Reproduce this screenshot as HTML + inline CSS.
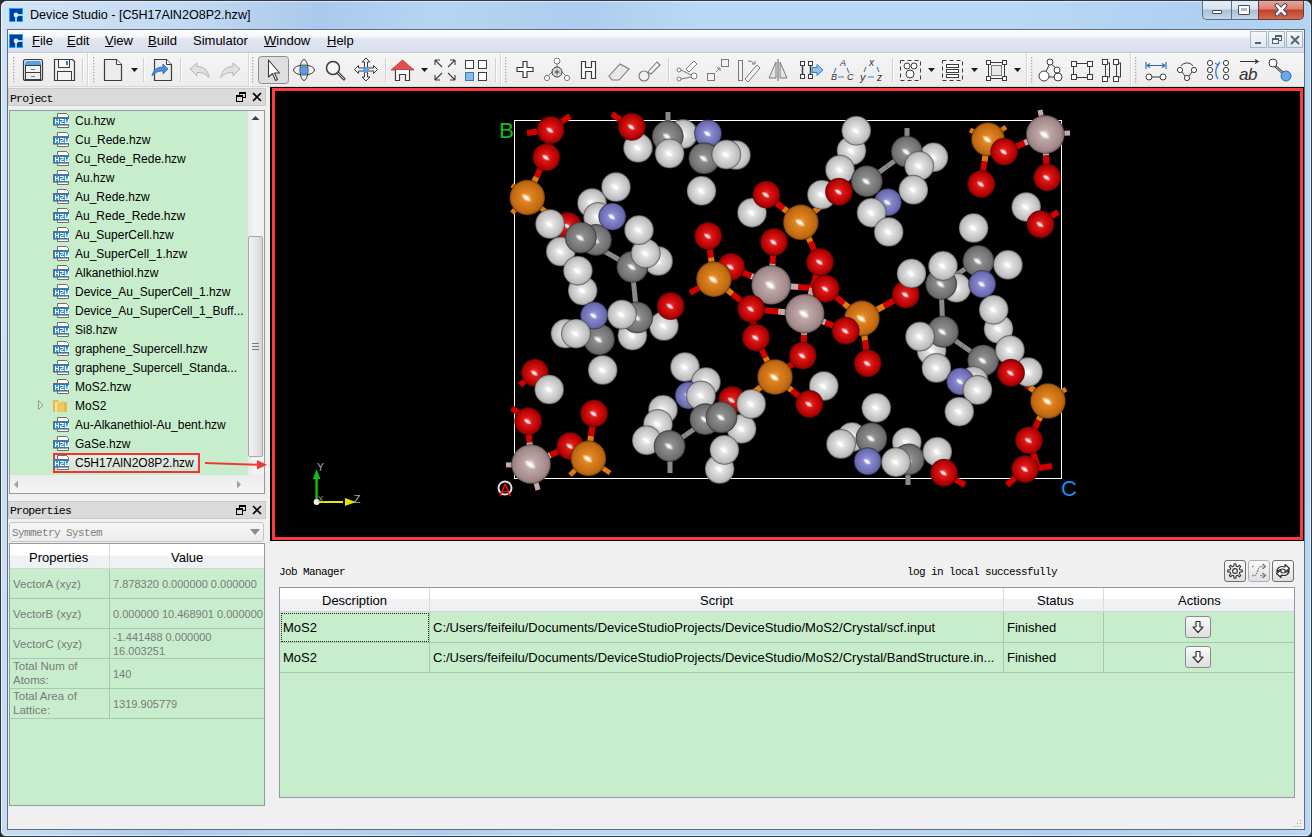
<!DOCTYPE html>
<html><head><meta charset="utf-8"><style>
html,body{margin:0;padding:0;width:1312px;height:837px;overflow:hidden;background:#2a2a2a;}
body{position:relative;font-family:'Liberation Sans', sans-serif;}
div{position:absolute;}
.t{white-space:nowrap;line-height:16px;}
u{text-decoration:underline;text-underline-offset:1px;}
</style></head><body>
<div style="left:0px;top:0px;width:1312px;height:837px;background:linear-gradient(100deg,#d2e3f6 0%,#c4dbf3 12%,#abc9ec 22%,#b6d4f3 30%,#aecdee 40%,#b9d8f7 48%,#b9d8f7 70%,#afd0f1 82%,#b9d8f6 100%);border:1px solid #303840;border-radius:7px 7px 6px 6px;box-sizing:border-box;"></div><div style="left:1px;top:1px;width:1310px;height:835px;border:1px solid rgba(255,255,255,0.55);border-radius:6px 6px 5px 5px;box-sizing:border-box;"></div><svg style="position:absolute;left:9px;top:8px" width="14" height="14" viewBox="0 0 14 14"><rect x="0" y="0" width="14" height="14" fill="#18a4ff"/><rect x="1" y="1" width="12" height="12" fill="#003c9c"/><rect x="7" y="6" width="7" height="2" fill="#90d4ff"/><rect x="6" y="7" width="2" height="7" fill="#90d4ff"/><circle cx="7" cy="7" r="2.4" fill="#d8ecff"/></svg><div class="t" style="left:30px;top:7px;font-size:12.6px;color:#000;">Device Studio - [C5H17AlN2O8P2.hzw]</div><div style="left:1202px;top:1px;width:29px;height:19px;background:linear-gradient(#e3eefa 0%,#d6e3f1 45%,#aabfd6 50%,#c5d6ea 100%);border:1px solid #5b6e86;border-top:none;border-right:none;border-radius:0 0 0 5px;box-sizing:border-box;"></div><div style="left:1231px;top:1px;width:27px;height:19px;background:linear-gradient(#e3eefa 0%,#d6e3f1 45%,#aabfd6 50%,#c5d6ea 100%);border:1px solid #5b6e86;border-top:none;border-right:none;box-sizing:border-box;"></div><div style="left:1258px;top:1px;width:46px;height:19px;background:linear-gradient(#eaa59a 0%,#d88070 45%,#c0402a 50%,#d76a50 100%);border:1px solid #6b3a32;border-top:none;border-radius:0 0 5px 0;box-sizing:border-box;"></div><div style="left:1212px;top:10px;width:10px;height:4px;background:#fff;border:1px solid #434a54;border-radius:1px;box-sizing:border-box;"></div><div style="left:1238px;top:5px;width:12px;height:10px;background:#fff;border:1px solid #434a54;border-radius:1px;box-sizing:border-box;"></div><div style="left:1241px;top:8px;width:6px;height:3px;background:#aabdd4;"></div><svg style="position:absolute;left:1273px;top:3px" width="16" height="14" viewBox="0 0 16 14"><path d="M4 2.5 L12 11 M12 2.5 L4 11" stroke="#3c4450" stroke-width="4.6" stroke-linecap="round"/><path d="M4 2.5 L12 11 M12 2.5 L4 11" stroke="#fff" stroke-width="2.6" stroke-linecap="round"/></svg><div style="left:7px;top:29px;width:1298px;height:801px;background:#f0f0f0;border:1px solid #5f6d7d;box-sizing:border-box;"></div><div style="left:8px;top:30px;width:1296px;height:22px;background:linear-gradient(#fdfdfe 0%,#f4f6fb 30%,#e4e8f3 38%,#dfe3f0 60%,#d9deed 100%);"></div><div style="left:8px;top:52px;width:1296px;height:1px;background:#c3cad8;"></div><svg style="position:absolute;left:9px;top:34px" width="14" height="14" viewBox="0 0 14 14"><rect x="0" y="0" width="14" height="14" fill="#18a4ff"/><rect x="1" y="1" width="12" height="12" fill="#003c9c"/><rect x="7" y="6" width="7" height="2" fill="#90d4ff"/><rect x="6" y="7" width="2" height="7" fill="#90d4ff"/><circle cx="7" cy="7" r="2.4" fill="#d8ecff"/></svg><div class="t" style="left:32px;top:33px;font-size:13px;color:#000;"><u>F</u>ile</div><div class="t" style="left:67px;top:33px;font-size:13px;color:#000;"><u>E</u>dit</div><div class="t" style="left:105px;top:33px;font-size:13px;color:#000;"><u>V</u>iew</div><div class="t" style="left:148px;top:33px;font-size:13px;color:#000;"><u>B</u>uild</div><div class="t" style="left:193px;top:33px;font-size:13px;color:#000;">Simulator</div><div class="t" style="left:264px;top:33px;font-size:13px;color:#000;"><u>W</u>indow</div><div class="t" style="left:327px;top:33px;font-size:13px;color:#000;"><u>H</u>elp</div><div style="left:1250px;top:31px;width:17px;height:17px;background:linear-gradient(#f4f8fc,#dde6f0);border:1px solid #a9b8c8;box-sizing:border-box;"></div><div style="left:1268px;top:31px;width:17px;height:17px;background:linear-gradient(#f4f8fc,#dde6f0);border:1px solid #a9b8c8;box-sizing:border-box;"></div><div style="left:1286px;top:31px;width:17px;height:17px;background:linear-gradient(#f4f8fc,#dde6f0);border:1px solid #a9b8c8;box-sizing:border-box;"></div><div style="left:1255px;top:42px;width:6px;height:2px;background:#55606c;"></div><svg style="position:absolute;left:1272px;top:35px" width="10" height="10" viewBox="0 0 10 10"><rect x="3.5" y="0.5" width="6" height="5" fill="none" stroke="#55606c"/><rect x="3.5" y="0.5" width="6" height="1.5" fill="#55606c"/><rect x="0.5" y="3.5" width="6" height="5" fill="#f0f4f8" stroke="#55606c"/><rect x="0.5" y="3.5" width="6" height="1.5" fill="#55606c"/></svg><svg style="position:absolute;left:1290px;top:35px" width="10" height="10" viewBox="0 0 10 10"><path d="M1 1 L9 9 M9 1 L1 9" stroke="#55606c" stroke-width="1.8"/></svg><div style="left:8px;top:53px;width:1296px;height:33px;background:linear-gradient(#f5f5f5,#ececec);"></div><div style="left:8px;top:86px;width:1296px;height:1px;background:#d8d8d8;"></div><svg style="position:absolute;left:0;top:0" width="1312" height="90" viewBox="0 0 1312 90"><rect x="87" y="53" width="1" height="33" fill="#d8d8d8"/><rect x="88" y="53" width="1" height="33" fill="#ffffff"/><rect x="248" y="53" width="1" height="33" fill="#d8d8d8"/><rect x="249" y="53" width="1" height="33" fill="#ffffff"/><rect x="500" y="53" width="1" height="33" fill="#d8d8d8"/><rect x="501" y="53" width="1" height="33" fill="#ffffff"/><rect x="1026" y="53" width="1" height="33" fill="#d8d8d8"/><rect x="1027" y="53" width="1" height="33" fill="#ffffff"/><rect x="1130" y="53" width="1" height="33" fill="#d8d8d8"/><rect x="1131" y="53" width="1" height="33" fill="#ffffff"/><rect x="13" y="57" width="1.3" height="1.3" fill="#a8a8a8"/><rect x="13" y="60" width="1.3" height="1.3" fill="#a8a8a8"/><rect x="13" y="63" width="1.3" height="1.3" fill="#a8a8a8"/><rect x="13" y="66" width="1.3" height="1.3" fill="#a8a8a8"/><rect x="13" y="69" width="1.3" height="1.3" fill="#a8a8a8"/><rect x="13" y="72" width="1.3" height="1.3" fill="#a8a8a8"/><rect x="13" y="75" width="1.3" height="1.3" fill="#a8a8a8"/><rect x="13" y="78" width="1.3" height="1.3" fill="#a8a8a8"/><rect x="13" y="81" width="1.3" height="1.3" fill="#a8a8a8"/><rect x="93" y="57" width="1.3" height="1.3" fill="#a8a8a8"/><rect x="93" y="60" width="1.3" height="1.3" fill="#a8a8a8"/><rect x="93" y="63" width="1.3" height="1.3" fill="#a8a8a8"/><rect x="93" y="66" width="1.3" height="1.3" fill="#a8a8a8"/><rect x="93" y="69" width="1.3" height="1.3" fill="#a8a8a8"/><rect x="93" y="72" width="1.3" height="1.3" fill="#a8a8a8"/><rect x="93" y="75" width="1.3" height="1.3" fill="#a8a8a8"/><rect x="93" y="78" width="1.3" height="1.3" fill="#a8a8a8"/><rect x="93" y="81" width="1.3" height="1.3" fill="#a8a8a8"/><rect x="252" y="57" width="1.3" height="1.3" fill="#a8a8a8"/><rect x="252" y="60" width="1.3" height="1.3" fill="#a8a8a8"/><rect x="252" y="63" width="1.3" height="1.3" fill="#a8a8a8"/><rect x="252" y="66" width="1.3" height="1.3" fill="#a8a8a8"/><rect x="252" y="69" width="1.3" height="1.3" fill="#a8a8a8"/><rect x="252" y="72" width="1.3" height="1.3" fill="#a8a8a8"/><rect x="252" y="75" width="1.3" height="1.3" fill="#a8a8a8"/><rect x="252" y="78" width="1.3" height="1.3" fill="#a8a8a8"/><rect x="252" y="81" width="1.3" height="1.3" fill="#a8a8a8"/><rect x="505" y="57" width="1.3" height="1.3" fill="#a8a8a8"/><rect x="505" y="60" width="1.3" height="1.3" fill="#a8a8a8"/><rect x="505" y="63" width="1.3" height="1.3" fill="#a8a8a8"/><rect x="505" y="66" width="1.3" height="1.3" fill="#a8a8a8"/><rect x="505" y="69" width="1.3" height="1.3" fill="#a8a8a8"/><rect x="505" y="72" width="1.3" height="1.3" fill="#a8a8a8"/><rect x="505" y="75" width="1.3" height="1.3" fill="#a8a8a8"/><rect x="505" y="78" width="1.3" height="1.3" fill="#a8a8a8"/><rect x="505" y="81" width="1.3" height="1.3" fill="#a8a8a8"/><rect x="1031" y="57" width="1.3" height="1.3" fill="#a8a8a8"/><rect x="1031" y="60" width="1.3" height="1.3" fill="#a8a8a8"/><rect x="1031" y="63" width="1.3" height="1.3" fill="#a8a8a8"/><rect x="1031" y="66" width="1.3" height="1.3" fill="#a8a8a8"/><rect x="1031" y="69" width="1.3" height="1.3" fill="#a8a8a8"/><rect x="1031" y="72" width="1.3" height="1.3" fill="#a8a8a8"/><rect x="1031" y="75" width="1.3" height="1.3" fill="#a8a8a8"/><rect x="1031" y="78" width="1.3" height="1.3" fill="#a8a8a8"/><rect x="1031" y="81" width="1.3" height="1.3" fill="#a8a8a8"/><rect x="1135" y="57" width="1.3" height="1.3" fill="#a8a8a8"/><rect x="1135" y="60" width="1.3" height="1.3" fill="#a8a8a8"/><rect x="1135" y="63" width="1.3" height="1.3" fill="#a8a8a8"/><rect x="1135" y="66" width="1.3" height="1.3" fill="#a8a8a8"/><rect x="1135" y="69" width="1.3" height="1.3" fill="#a8a8a8"/><rect x="1135" y="72" width="1.3" height="1.3" fill="#a8a8a8"/><rect x="1135" y="75" width="1.3" height="1.3" fill="#a8a8a8"/><rect x="1135" y="78" width="1.3" height="1.3" fill="#a8a8a8"/><rect x="1135" y="81" width="1.3" height="1.3" fill="#a8a8a8"/><rect x="23.5" y="59.5" width="19" height="21" rx="2" fill="#e6e6e6" stroke="#3c3c3c" stroke-width="1.2"/><path d="M26 61 h14 l1.5 4 h-17 z" fill="#5aa0e8"/><rect x="25.5" y="65.5" width="15" height="7" fill="#f4f4f4" stroke="#3c3c3c"/><rect x="25.5" y="72.5" width="15" height="7" fill="#ececec" stroke="#3c3c3c"/><rect x="31" y="69" width="4" height="1" fill="#7a7a7a"/><rect x="31" y="76" width="4" height="1" fill="#7a7a7a"/><path d="M54.5 59.5 h18 l2 2 v19 h-20 z" fill="#f0f0f0" stroke="#3c3c3c" stroke-width="1.2"/><rect x="58.5" y="59.5" width="11" height="8" fill="#fafafa" stroke="#3c3c3c"/><rect x="66" y="61" width="2" height="4" fill="#2a7ad0"/><rect x="57.5" y="71.5" width="14" height="9" fill="#f4f4f4" stroke="#3c3c3c"/><rect x="82" y="58" width="1" height="24" fill="#d2d2d2"/><rect x="83" y="58" width="1" height="24" fill="#fafafa"/><path d="M104.5 59.5 h12 l5 5 v16 h-17 z" fill="#ececec" stroke="#3c3c3c" stroke-width="1.2"/><path d="M116.5 59.5 v5 h5" fill="#fff" stroke="#3c3c3c"/><path d="M131 68 h7 l-3.5 4 z" fill="#1a1a1a"/><rect x="143" y="58" width="1" height="24" fill="#d2d2d2"/><rect x="144" y="58" width="1" height="24" fill="#fafafa"/><path d="M154.5 59.5 h12 l5 5 v16 h-17 z" fill="#ececec" stroke="#3c3c3c" stroke-width="1.2"/><path d="M166.5 59.5 v5 h5" fill="#fff" stroke="#3c3c3c"/><path d="M152 76 C153 70 157 67 163 67 v-3 l5 5 l-5 5 v-3 C159 71 155 72 152 76 z" fill="#4a8ed6" stroke="#2a68b0" stroke-width="0.8"/><rect x="180" y="58" width="1" height="24" fill="#d2d2d2"/><rect x="181" y="58" width="1" height="24" fill="#fafafa"/><path d="M190 69 l7 -6 v3.5 c6 0 11 3 12 11 c-3 -4 -7 -5 -12 -5 v3.5 z" fill="#e0e0e0" stroke="#b4b4b4"/><path d="M240 69 l-7 -6 v3.5 c-6 0 -11 3 -12 11 c3 -4 7 -5 12 -5 v3.5 z" fill="#e0e0e0" stroke="#b4b4b4"/><rect x="258.5" y="56.5" width="30" height="27" rx="3" fill="#dedede" stroke="#8c8c8c"/><path d="M268.5 60 v17 l4 -3.5 l3 7 l2 -1 l-3 -6.5 h5 z" fill="#fff" stroke="#3c3c3c" stroke-width="1.1" stroke-linejoin="round"/><ellipse cx="304" cy="70" rx="10.5" ry="5" fill="none" stroke="#3c3c3c" stroke-width="1"/><ellipse cx="304" cy="70" rx="4" ry="10.5" fill="none" stroke="#3c3c3c" stroke-width="1"/><circle cx="304" cy="70" r="4" fill="#5a9ee6" stroke="#2a68b0" stroke-width="0.6"/><circle cx="333" cy="68" r="6.5" fill="#f6f6f6" stroke="#3c3c3c" stroke-width="1.5"/><path d="M338 73 l6 6" stroke="#3c3c3c" stroke-width="3" stroke-linecap="round"/><path d="M338 73 l6 6" stroke="#e0e0e0" stroke-width="1" stroke-linecap="round"/><path d="M366 58 l4 4 h-2.5 v6 h6 v-2.5 l4 4 l-4 4 v-2.5 h-6 v6 h2.5 l-4 4 l-4 -4 h2.5 v-6 h-6 v2.5 l-4 -4 l4 -4 v2.5 h6 v-6 h-2.5 z" fill="#f4f4f4" stroke="#3c3c3c" stroke-width="1"/><circle cx="366" cy="70" r="3" fill="#5a9ee6"/><rect x="385" y="58" width="1" height="24" fill="#d2d2d2"/><rect x="386" y="58" width="1" height="24" fill="#fafafa"/><path d="M391 70 l11.5 -10 l11.5 10 z" fill="#e05050" stroke="#c03030" stroke-width="0.8"/><path d="M395.5 70 v10.5 h4 v-6 h6 v6 h4 v-10.5" fill="#fff" stroke="#3c3c3c" stroke-width="1.2"/><path d="M421 68 h7 l-3.5 4 z" fill="#1a1a1a"/><path d="M435 60 h5 M435 60 v5 M435 60 l7 7" stroke="#3c3c3c" stroke-width="1.1" fill="none"/><path d="M455 60 h-5 M455 60 v5 M455 60 l-7 7" stroke="#3c3c3c" stroke-width="1.1" fill="none"/><path d="M435 80 h5 M435 80 v-5 M435 80 l7 -7" stroke="#3c3c3c" stroke-width="1.1" fill="none"/><path d="M455 80 h-5 M455 80 v-5 M455 80 l-7 -7" stroke="#3c3c3c" stroke-width="1.1" fill="none"/><rect x="465.5" y="60.5" width="8" height="8" fill="#fff" stroke="#3c3c3c"/><rect x="478.5" y="60.5" width="8" height="8" fill="#fff" stroke="#3c3c3c"/><rect x="465.5" y="72.5" width="8" height="8" fill="#8ab8e8" stroke="#3a78c0"/><rect x="478.5" y="72.5" width="8" height="8" fill="#fff" stroke="#3c3c3c"/><rect x="495" y="58" width="1" height="24" fill="#d2d2d2"/><rect x="496" y="58" width="1" height="24" fill="#fafafa"/><path d="M523 61.5 h4 v6 h6 v4 h-6 v6 h-4 v-6 h-6 v-4 h6 z" fill="#fff" stroke="#3c3c3c" stroke-width="1.2"/><path d="M557 64 v4 M552 72 l-5 5 M562 72 l5 5" stroke="#7a7a7a" stroke-width="1"/><circle cx="557" cy="61" r="3" fill="#fff" stroke="#7a7a7a"/><circle cx="557" cy="72" r="5" fill="#d8d8d8" stroke="#3c3c3c"/><path d="M554.5 72 h5 M557 69.5 v5" stroke="#3c3c3c" stroke-width="1"/><circle cx="547" cy="78" r="2.6" fill="#fff" stroke="#7a7a7a"/><circle cx="567" cy="78" r="2.6" fill="#fff" stroke="#7a7a7a"/><path d="M581.5 61.5 h4 v6 h6 v-6 h4 v17 h-4 v-7 h-6 v7 h-4 z" fill="#fff" stroke="#3c3c3c" stroke-width="1.2"/><path d="M609 76 l11 -12 l9 5 l-10 11 h-7 z" fill="#e8e8e8" stroke="#7a7a7a" stroke-width="1.1"/><circle cx="644" cy="76" r="5" fill="#f2f2f2" stroke="#7a7a7a" stroke-width="1.2"/><path d="M648 72 l9 -10 l3 3 l-9 9 z" fill="#fff" stroke="#7a7a7a" stroke-width="1.1"/><rect x="668" y="58" width="1" height="24" fill="#d2d2d2"/><rect x="669" y="58" width="1" height="24" fill="#fafafa"/><circle cx="679" cy="70" r="2" fill="#fff" stroke="#7a7a7a"/><circle cx="679" cy="79" r="2" fill="#fff" stroke="#7a7a7a"/><circle cx="694" cy="76" r="3" fill="#fff" stroke="#7a7a7a"/><path d="M681 70 l10 5 M681 79 l10 -2" stroke="#7a7a7a"/><path d="M686 69 l8 -8 l3 3 l-8 8 z" fill="#fff" stroke="#7a7a7a"/><rect x="707.5" y="73.5" width="7" height="7" fill="#f2f2f2" stroke="#7a7a7a"/><rect x="721.5" y="59.5" width="7" height="7" fill="#f2f2f2" stroke="#7a7a7a"/><path d="M716 72 l4 -4 M717 68 h3 v3" stroke="#7a7a7a" fill="none"/><rect x="738.5" y="60.5" width="4" height="20" fill="#f2f2f2" stroke="#7a7a7a"/><path d="M745 79 l12 -14 l3 3 l-12 14 z" fill="#f2f2f2" stroke="#7a7a7a"/><path d="M748 61 c3 0 5 1 6 3 M752 64 h3 v-3" stroke="#7a7a7a" fill="none"/><path d="M778 59 v22" stroke="#7a7a7a" stroke-width="1.2"/><path d="M776 62 l-7 16 h7 z" fill="#e4e4e4" stroke="#7a7a7a"/><path d="M780 62 l7 16 h-7 z" fill="#e4e4e4" stroke="#7a7a7a"/><rect x="800.5" y="61.5" width="4" height="4" fill="#fff" stroke="#3c3c3c"/><rect x="808.5" y="61.5" width="4" height="4" fill="#fff" stroke="#3c3c3c"/><rect x="800.5" y="74.5" width="4" height="4" fill="#fff" stroke="#3c3c3c"/><rect x="808.5" y="74.5" width="4" height="4" fill="#fff" stroke="#3c3c3c"/><path d="M802.5 66 v8 M810.5 66 v8" stroke="#3c3c3c" stroke-width="1.5"/><path d="M812 67.5 h5 v-3 l6 5.5 l-6 5.5 v-3 h-5 z" fill="#8ec0f0" stroke="#3a78c0"/><text x="840" y="66" font-family="Liberation Sans" font-style="italic" font-size="9" fill="#333">A</text><text x="831" y="80" font-family="Liberation Sans" font-style="italic" font-size="9" fill="#333">B</text><text x="847" y="80" font-family="Liberation Sans" font-style="italic" font-size="9" fill="#333">C</text><path d="M836 68 l-2 5 M847 68 l2 5 M838 77 h6" stroke="#3a80d0" stroke-width="1.1" fill="none"/><text x="869" y="66" font-family="Liberation Sans" font-style="italic" font-size="10" fill="#333">x</text><text x="860" y="81" font-family="Liberation Sans" font-style="italic" font-size="11" fill="#333">y</text><text x="877" y="81" font-family="Liberation Sans" font-style="italic" font-size="10" fill="#333">z</text><path d="M866 67 l-2 5 M877 67 l2 5 M868 77 h6" stroke="#3a80d0" stroke-width="1.1" fill="none"/><rect x="892" y="58" width="1" height="24" fill="#d2d2d2"/><rect x="893" y="58" width="1" height="24" fill="#fafafa"/><rect x="900.5" y="60.5" width="20" height="20" fill="none" stroke="#3c3c3c" stroke-dasharray="4 3"/><circle cx="907" cy="66" r="3" fill="#fff" stroke="#3c3c3c"/><circle cx="914" cy="66" r="3" fill="#fff" stroke="#3c3c3c"/><circle cx="910" cy="74" r="4" fill="#fff" stroke="#3c3c3c"/><path d="M928 68 h7 l-3.5 4 z" fill="#1a1a1a"/><rect x="942.5" y="60.5" width="20" height="20" fill="none" stroke="#3c3c3c" stroke-dasharray="4 3"/><rect x="946.5" y="64.5" width="12" height="3" fill="#fff" stroke="#3c3c3c"/><rect x="946.5" y="69.5" width="12" height="3" fill="#fff" stroke="#3c3c3c"/><rect x="946.5" y="74.5" width="12" height="3" fill="#fff" stroke="#3c3c3c"/><path d="M971 68 h7 l-3.5 4 z" fill="#1a1a1a"/><rect x="988.5" y="62.5" width="16" height="16" fill="#f4f4f4" stroke="#3c3c3c"/><rect x="991.5" y="65.5" width="10" height="10" fill="#e8e8e8" stroke="#7a7a7a"/><rect x="986.5" y="60.5" width="4" height="4" fill="#fff" stroke="#3c3c3c"/><rect x="1002.5" y="60.5" width="4" height="4" fill="#fff" stroke="#3c3c3c"/><rect x="986.5" y="76.5" width="4" height="4" fill="#fff" stroke="#3c3c3c"/><rect x="1002.5" y="76.5" width="4" height="4" fill="#fff" stroke="#3c3c3c"/><path d="M1014 68 h7 l-3.5 4 z" fill="#1a1a1a"/><path d="M1050 63 l-6 13 M1050 63 l7 6 M1057 69 l0 8 M1044 77 h13" stroke="#3c3c3c" fill="none"/><circle cx="1050" cy="62" r="3" fill="#fff" stroke="#3c3c3c"/><circle cx="1057" cy="70" r="3" fill="#fff" stroke="#3c3c3c"/><circle cx="1044" cy="76" r="5" fill="#fff" stroke="#3c3c3c"/><circle cx="1058" cy="77" r="4" fill="#fff" stroke="#3c3c3c"/><rect x="1073.5" y="63.5" width="16" height="14" fill="none" stroke="#3c3c3c"/><rect x="1071.5" y="61.5" width="5" height="5" fill="#fff" stroke="#3c3c3c"/><rect x="1087.5" y="61.5" width="5" height="5" fill="#fff" stroke="#3c3c3c"/><rect x="1071.5" y="74.5" width="5" height="5" fill="#fff" stroke="#3c3c3c"/><rect x="1087.5" y="74.5" width="5" height="5" fill="#fff" stroke="#3c3c3c"/><rect x="1105.5" y="63" width="4" height="14" fill="none" stroke="#3c3c3c"/><rect x="1116.5" y="63" width="4" height="14" fill="none" stroke="#3c3c3c"/><rect x="1102.5" y="59.5" width="5" height="5" fill="#fff" stroke="#3c3c3c"/><rect x="1113.5" y="59.5" width="5" height="5" fill="#fff" stroke="#3c3c3c"/><rect x="1102.5" y="76.5" width="5" height="5" fill="#fff" stroke="#3c3c3c"/><rect x="1113.5" y="76.5" width="5" height="5" fill="#fff" stroke="#3c3c3c"/><path d="M1146 62 v7 M1166 62 v7 M1147 65.5 h18 M1147 65.5 l3 -2 M1147 65.5 l3 2 M1165 65.5 l-3 -2 M1165 65.5 l-3 2" stroke="#2a6ab0" stroke-width="1.1" fill="none"/><circle cx="1149" cy="77" r="3" fill="#fff" stroke="#3c3c3c"/><circle cx="1163" cy="77" r="3" fill="#fff" stroke="#3c3c3c"/><path d="M1152 77 h8" stroke="#3c3c3c"/><circle cx="1180" cy="70" r="2.6" fill="#fff" stroke="#3c3c3c"/><circle cx="1194" cy="70" r="2.6" fill="#fff" stroke="#3c3c3c"/><circle cx="1187" cy="78" r="2.6" fill="#fff" stroke="#3c3c3c"/><path d="M1182 72 l3 4 M1192 72 l-3 4" stroke="#3c3c3c"/><path d="M1181 66 c2 -4 10 -4 12 0" stroke="#3c3c3c" fill="none"/><circle cx="1210" cy="63" r="2.6" fill="#fff" stroke="#3c3c3c"/><circle cx="1210" cy="70" r="2.6" fill="#fff" stroke="#3c3c3c"/><circle cx="1210" cy="77" r="2.6" fill="#fff" stroke="#3c3c3c"/><circle cx="1226" cy="63" r="2.6" fill="#fff" stroke="#3c3c3c"/><circle cx="1226" cy="70" r="2.6" fill="#fff" stroke="#3c3c3c"/><circle cx="1226" cy="77" r="2.6" fill="#fff" stroke="#3c3c3c"/><path d="M1218 79 c-3 -4 -3 -10 0 -14 M1215 63 l3 2 l2 -3" stroke="#3a80d0" stroke-width="1.4" fill="none"/><text x="1239" y="80" font-family="Liberation Sans" font-style="italic" font-size="17" fill="#333" letter-spacing="-0.5">ab</text><path d="M1240 61.5 h18 l-3 -2 M1258 61.5 l-3 2" stroke="#333" stroke-width="1.1" fill="none"/><path d="M1274 65 l10 9" stroke="#3c3c3c" stroke-width="2.4"/><path d="M1274 65 l10 9" stroke="#fff" stroke-width="0.8"/><circle cx="1273" cy="63" r="4" fill="#fff" stroke="#3c3c3c"/><circle cx="1286" cy="76" r="5" fill="#6aa8e8" stroke="#2a68b0"/></svg><div style="left:8px;top:88px;width:258px;height:18px;background:#dadada;border:1px solid #cacaca;box-sizing:border-box;"></div><div class="t" style="left:10px;top:91px;font-family:'Liberation Mono', monospace;font-size:11.5px;letter-spacing:-0.8px;color:#000;">Project</div><svg style="position:absolute;left:236px;top:92px" width="10" height="10" viewBox="0 0 10 10"><rect x="3.5" y="0.5" width="6" height="5" fill="none" stroke="#000"/><rect x="3.5" y="0.5" width="6" height="1.5" fill="#000"/><rect x="0.5" y="3.5" width="6" height="6" fill="#dadada" stroke="#000"/><rect x="0.5" y="3.5" width="6" height="1.5" fill="#000"/></svg><svg style="position:absolute;left:252px;top:92px" width="10" height="10" viewBox="0 0 10 10"><path d="M1 1 L9 9 M9 1 L1 9" stroke="#000" stroke-width="1.6"/></svg><div style="left:9px;top:110px;width:256px;height:384px;background:#c7edcc;border:1px solid #8e9aa8;box-sizing:border-box;"></div><div style="left:53px;top:453px;width:147px;height:20px;border:2.5px solid #f03434;box-sizing:border-box;background:linear-gradient(#e6eee6,#d6e2d6);"></div><svg style="position:absolute;left:52px;top:112px" width="18" height="17" viewBox="0 0 18 17"><path d="M5.5 1.5 H14.5 L16.5 3.5 V15.5 H5.5 Z" fill="#fff" stroke="#6e6e6e"/><rect x="1" y="5" width="16" height="8.6" fill="#6e6e6e"/><rect x="2" y="6" width="15" height="6.6" fill="#1a7fd4"/><g fill="#fff"><rect x="3" y="7" width="1.2" height="5"/><rect x="5.8" y="7" width="1.2" height="5"/><rect x="3" y="9" width="4" height="1"/><rect x="8" y="7" width="3.5" height="1"/><rect x="10.6" y="7" width="1" height="2.6"/><rect x="8.6" y="9.2" width="2.8" height="1"/><rect x="8" y="9.8" width="1" height="2.2"/><rect x="8" y="11" width="4" height="1"/><rect x="12.8" y="7" width="1.1" height="5"/><rect x="14.6" y="8.6" width="1" height="3.4"/><rect x="16" y="7" width="1" height="5"/><rect x="12.8" y="11" width="4.2" height="1"/></g></svg><div class="t" style="left:75px;top:113px;font-size:12px;color:#000;white-space:nowrap;">Cu.hzw</div><svg style="position:absolute;left:52px;top:131px" width="18" height="17" viewBox="0 0 18 17"><path d="M5.5 1.5 H14.5 L16.5 3.5 V15.5 H5.5 Z" fill="#fff" stroke="#6e6e6e"/><rect x="1" y="5" width="16" height="8.6" fill="#6e6e6e"/><rect x="2" y="6" width="15" height="6.6" fill="#1a7fd4"/><g fill="#fff"><rect x="3" y="7" width="1.2" height="5"/><rect x="5.8" y="7" width="1.2" height="5"/><rect x="3" y="9" width="4" height="1"/><rect x="8" y="7" width="3.5" height="1"/><rect x="10.6" y="7" width="1" height="2.6"/><rect x="8.6" y="9.2" width="2.8" height="1"/><rect x="8" y="9.8" width="1" height="2.2"/><rect x="8" y="11" width="4" height="1"/><rect x="12.8" y="7" width="1.1" height="5"/><rect x="14.6" y="8.6" width="1" height="3.4"/><rect x="16" y="7" width="1" height="5"/><rect x="12.8" y="11" width="4.2" height="1"/></g></svg><div class="t" style="left:75px;top:132px;font-size:12px;color:#000;white-space:nowrap;">Cu_Rede.hzw</div><svg style="position:absolute;left:52px;top:150px" width="18" height="17" viewBox="0 0 18 17"><path d="M5.5 1.5 H14.5 L16.5 3.5 V15.5 H5.5 Z" fill="#fff" stroke="#6e6e6e"/><rect x="1" y="5" width="16" height="8.6" fill="#6e6e6e"/><rect x="2" y="6" width="15" height="6.6" fill="#1a7fd4"/><g fill="#fff"><rect x="3" y="7" width="1.2" height="5"/><rect x="5.8" y="7" width="1.2" height="5"/><rect x="3" y="9" width="4" height="1"/><rect x="8" y="7" width="3.5" height="1"/><rect x="10.6" y="7" width="1" height="2.6"/><rect x="8.6" y="9.2" width="2.8" height="1"/><rect x="8" y="9.8" width="1" height="2.2"/><rect x="8" y="11" width="4" height="1"/><rect x="12.8" y="7" width="1.1" height="5"/><rect x="14.6" y="8.6" width="1" height="3.4"/><rect x="16" y="7" width="1" height="5"/><rect x="12.8" y="11" width="4.2" height="1"/></g></svg><div class="t" style="left:75px;top:151px;font-size:12px;color:#000;white-space:nowrap;">Cu_Rede_Rede.hzw</div><svg style="position:absolute;left:52px;top:169px" width="18" height="17" viewBox="0 0 18 17"><path d="M5.5 1.5 H14.5 L16.5 3.5 V15.5 H5.5 Z" fill="#fff" stroke="#6e6e6e"/><rect x="1" y="5" width="16" height="8.6" fill="#6e6e6e"/><rect x="2" y="6" width="15" height="6.6" fill="#1a7fd4"/><g fill="#fff"><rect x="3" y="7" width="1.2" height="5"/><rect x="5.8" y="7" width="1.2" height="5"/><rect x="3" y="9" width="4" height="1"/><rect x="8" y="7" width="3.5" height="1"/><rect x="10.6" y="7" width="1" height="2.6"/><rect x="8.6" y="9.2" width="2.8" height="1"/><rect x="8" y="9.8" width="1" height="2.2"/><rect x="8" y="11" width="4" height="1"/><rect x="12.8" y="7" width="1.1" height="5"/><rect x="14.6" y="8.6" width="1" height="3.4"/><rect x="16" y="7" width="1" height="5"/><rect x="12.8" y="11" width="4.2" height="1"/></g></svg><div class="t" style="left:75px;top:170px;font-size:12px;color:#000;white-space:nowrap;">Au.hzw</div><svg style="position:absolute;left:52px;top:188px" width="18" height="17" viewBox="0 0 18 17"><path d="M5.5 1.5 H14.5 L16.5 3.5 V15.5 H5.5 Z" fill="#fff" stroke="#6e6e6e"/><rect x="1" y="5" width="16" height="8.6" fill="#6e6e6e"/><rect x="2" y="6" width="15" height="6.6" fill="#1a7fd4"/><g fill="#fff"><rect x="3" y="7" width="1.2" height="5"/><rect x="5.8" y="7" width="1.2" height="5"/><rect x="3" y="9" width="4" height="1"/><rect x="8" y="7" width="3.5" height="1"/><rect x="10.6" y="7" width="1" height="2.6"/><rect x="8.6" y="9.2" width="2.8" height="1"/><rect x="8" y="9.8" width="1" height="2.2"/><rect x="8" y="11" width="4" height="1"/><rect x="12.8" y="7" width="1.1" height="5"/><rect x="14.6" y="8.6" width="1" height="3.4"/><rect x="16" y="7" width="1" height="5"/><rect x="12.8" y="11" width="4.2" height="1"/></g></svg><div class="t" style="left:75px;top:189px;font-size:12px;color:#000;white-space:nowrap;">Au_Rede.hzw</div><svg style="position:absolute;left:52px;top:207px" width="18" height="17" viewBox="0 0 18 17"><path d="M5.5 1.5 H14.5 L16.5 3.5 V15.5 H5.5 Z" fill="#fff" stroke="#6e6e6e"/><rect x="1" y="5" width="16" height="8.6" fill="#6e6e6e"/><rect x="2" y="6" width="15" height="6.6" fill="#1a7fd4"/><g fill="#fff"><rect x="3" y="7" width="1.2" height="5"/><rect x="5.8" y="7" width="1.2" height="5"/><rect x="3" y="9" width="4" height="1"/><rect x="8" y="7" width="3.5" height="1"/><rect x="10.6" y="7" width="1" height="2.6"/><rect x="8.6" y="9.2" width="2.8" height="1"/><rect x="8" y="9.8" width="1" height="2.2"/><rect x="8" y="11" width="4" height="1"/><rect x="12.8" y="7" width="1.1" height="5"/><rect x="14.6" y="8.6" width="1" height="3.4"/><rect x="16" y="7" width="1" height="5"/><rect x="12.8" y="11" width="4.2" height="1"/></g></svg><div class="t" style="left:75px;top:208px;font-size:12px;color:#000;white-space:nowrap;">Au_Rede_Rede.hzw</div><svg style="position:absolute;left:52px;top:226px" width="18" height="17" viewBox="0 0 18 17"><path d="M5.5 1.5 H14.5 L16.5 3.5 V15.5 H5.5 Z" fill="#fff" stroke="#6e6e6e"/><rect x="1" y="5" width="16" height="8.6" fill="#6e6e6e"/><rect x="2" y="6" width="15" height="6.6" fill="#1a7fd4"/><g fill="#fff"><rect x="3" y="7" width="1.2" height="5"/><rect x="5.8" y="7" width="1.2" height="5"/><rect x="3" y="9" width="4" height="1"/><rect x="8" y="7" width="3.5" height="1"/><rect x="10.6" y="7" width="1" height="2.6"/><rect x="8.6" y="9.2" width="2.8" height="1"/><rect x="8" y="9.8" width="1" height="2.2"/><rect x="8" y="11" width="4" height="1"/><rect x="12.8" y="7" width="1.1" height="5"/><rect x="14.6" y="8.6" width="1" height="3.4"/><rect x="16" y="7" width="1" height="5"/><rect x="12.8" y="11" width="4.2" height="1"/></g></svg><div class="t" style="left:75px;top:227px;font-size:12px;color:#000;white-space:nowrap;">Au_SuperCell.hzw</div><svg style="position:absolute;left:52px;top:245px" width="18" height="17" viewBox="0 0 18 17"><path d="M5.5 1.5 H14.5 L16.5 3.5 V15.5 H5.5 Z" fill="#fff" stroke="#6e6e6e"/><rect x="1" y="5" width="16" height="8.6" fill="#6e6e6e"/><rect x="2" y="6" width="15" height="6.6" fill="#1a7fd4"/><g fill="#fff"><rect x="3" y="7" width="1.2" height="5"/><rect x="5.8" y="7" width="1.2" height="5"/><rect x="3" y="9" width="4" height="1"/><rect x="8" y="7" width="3.5" height="1"/><rect x="10.6" y="7" width="1" height="2.6"/><rect x="8.6" y="9.2" width="2.8" height="1"/><rect x="8" y="9.8" width="1" height="2.2"/><rect x="8" y="11" width="4" height="1"/><rect x="12.8" y="7" width="1.1" height="5"/><rect x="14.6" y="8.6" width="1" height="3.4"/><rect x="16" y="7" width="1" height="5"/><rect x="12.8" y="11" width="4.2" height="1"/></g></svg><div class="t" style="left:75px;top:246px;font-size:12px;color:#000;white-space:nowrap;">Au_SuperCell_1.hzw</div><svg style="position:absolute;left:52px;top:264px" width="18" height="17" viewBox="0 0 18 17"><path d="M5.5 1.5 H14.5 L16.5 3.5 V15.5 H5.5 Z" fill="#fff" stroke="#6e6e6e"/><rect x="1" y="5" width="16" height="8.6" fill="#6e6e6e"/><rect x="2" y="6" width="15" height="6.6" fill="#1a7fd4"/><g fill="#fff"><rect x="3" y="7" width="1.2" height="5"/><rect x="5.8" y="7" width="1.2" height="5"/><rect x="3" y="9" width="4" height="1"/><rect x="8" y="7" width="3.5" height="1"/><rect x="10.6" y="7" width="1" height="2.6"/><rect x="8.6" y="9.2" width="2.8" height="1"/><rect x="8" y="9.8" width="1" height="2.2"/><rect x="8" y="11" width="4" height="1"/><rect x="12.8" y="7" width="1.1" height="5"/><rect x="14.6" y="8.6" width="1" height="3.4"/><rect x="16" y="7" width="1" height="5"/><rect x="12.8" y="11" width="4.2" height="1"/></g></svg><div class="t" style="left:75px;top:265px;font-size:12px;color:#000;white-space:nowrap;">Alkanethiol.hzw</div><svg style="position:absolute;left:52px;top:283px" width="18" height="17" viewBox="0 0 18 17"><path d="M5.5 1.5 H14.5 L16.5 3.5 V15.5 H5.5 Z" fill="#fff" stroke="#6e6e6e"/><rect x="1" y="5" width="16" height="8.6" fill="#6e6e6e"/><rect x="2" y="6" width="15" height="6.6" fill="#1a7fd4"/><g fill="#fff"><rect x="3" y="7" width="1.2" height="5"/><rect x="5.8" y="7" width="1.2" height="5"/><rect x="3" y="9" width="4" height="1"/><rect x="8" y="7" width="3.5" height="1"/><rect x="10.6" y="7" width="1" height="2.6"/><rect x="8.6" y="9.2" width="2.8" height="1"/><rect x="8" y="9.8" width="1" height="2.2"/><rect x="8" y="11" width="4" height="1"/><rect x="12.8" y="7" width="1.1" height="5"/><rect x="14.6" y="8.6" width="1" height="3.4"/><rect x="16" y="7" width="1" height="5"/><rect x="12.8" y="11" width="4.2" height="1"/></g></svg><div class="t" style="left:75px;top:284px;font-size:12px;color:#000;white-space:nowrap;">Device_Au_SuperCell_1.hzw</div><svg style="position:absolute;left:52px;top:302px" width="18" height="17" viewBox="0 0 18 17"><path d="M5.5 1.5 H14.5 L16.5 3.5 V15.5 H5.5 Z" fill="#fff" stroke="#6e6e6e"/><rect x="1" y="5" width="16" height="8.6" fill="#6e6e6e"/><rect x="2" y="6" width="15" height="6.6" fill="#1a7fd4"/><g fill="#fff"><rect x="3" y="7" width="1.2" height="5"/><rect x="5.8" y="7" width="1.2" height="5"/><rect x="3" y="9" width="4" height="1"/><rect x="8" y="7" width="3.5" height="1"/><rect x="10.6" y="7" width="1" height="2.6"/><rect x="8.6" y="9.2" width="2.8" height="1"/><rect x="8" y="9.8" width="1" height="2.2"/><rect x="8" y="11" width="4" height="1"/><rect x="12.8" y="7" width="1.1" height="5"/><rect x="14.6" y="8.6" width="1" height="3.4"/><rect x="16" y="7" width="1" height="5"/><rect x="12.8" y="11" width="4.2" height="1"/></g></svg><div class="t" style="left:75px;top:303px;font-size:12px;color:#000;white-space:nowrap;">Device_Au_SuperCell_1_Buff...</div><svg style="position:absolute;left:52px;top:321px" width="18" height="17" viewBox="0 0 18 17"><path d="M5.5 1.5 H14.5 L16.5 3.5 V15.5 H5.5 Z" fill="#fff" stroke="#6e6e6e"/><rect x="1" y="5" width="16" height="8.6" fill="#6e6e6e"/><rect x="2" y="6" width="15" height="6.6" fill="#1a7fd4"/><g fill="#fff"><rect x="3" y="7" width="1.2" height="5"/><rect x="5.8" y="7" width="1.2" height="5"/><rect x="3" y="9" width="4" height="1"/><rect x="8" y="7" width="3.5" height="1"/><rect x="10.6" y="7" width="1" height="2.6"/><rect x="8.6" y="9.2" width="2.8" height="1"/><rect x="8" y="9.8" width="1" height="2.2"/><rect x="8" y="11" width="4" height="1"/><rect x="12.8" y="7" width="1.1" height="5"/><rect x="14.6" y="8.6" width="1" height="3.4"/><rect x="16" y="7" width="1" height="5"/><rect x="12.8" y="11" width="4.2" height="1"/></g></svg><div class="t" style="left:75px;top:322px;font-size:12px;color:#000;white-space:nowrap;">Si8.hzw</div><svg style="position:absolute;left:52px;top:340px" width="18" height="17" viewBox="0 0 18 17"><path d="M5.5 1.5 H14.5 L16.5 3.5 V15.5 H5.5 Z" fill="#fff" stroke="#6e6e6e"/><rect x="1" y="5" width="16" height="8.6" fill="#6e6e6e"/><rect x="2" y="6" width="15" height="6.6" fill="#1a7fd4"/><g fill="#fff"><rect x="3" y="7" width="1.2" height="5"/><rect x="5.8" y="7" width="1.2" height="5"/><rect x="3" y="9" width="4" height="1"/><rect x="8" y="7" width="3.5" height="1"/><rect x="10.6" y="7" width="1" height="2.6"/><rect x="8.6" y="9.2" width="2.8" height="1"/><rect x="8" y="9.8" width="1" height="2.2"/><rect x="8" y="11" width="4" height="1"/><rect x="12.8" y="7" width="1.1" height="5"/><rect x="14.6" y="8.6" width="1" height="3.4"/><rect x="16" y="7" width="1" height="5"/><rect x="12.8" y="11" width="4.2" height="1"/></g></svg><div class="t" style="left:75px;top:341px;font-size:12px;color:#000;white-space:nowrap;">graphene_Supercell.hzw</div><svg style="position:absolute;left:52px;top:359px" width="18" height="17" viewBox="0 0 18 17"><path d="M5.5 1.5 H14.5 L16.5 3.5 V15.5 H5.5 Z" fill="#fff" stroke="#6e6e6e"/><rect x="1" y="5" width="16" height="8.6" fill="#6e6e6e"/><rect x="2" y="6" width="15" height="6.6" fill="#1a7fd4"/><g fill="#fff"><rect x="3" y="7" width="1.2" height="5"/><rect x="5.8" y="7" width="1.2" height="5"/><rect x="3" y="9" width="4" height="1"/><rect x="8" y="7" width="3.5" height="1"/><rect x="10.6" y="7" width="1" height="2.6"/><rect x="8.6" y="9.2" width="2.8" height="1"/><rect x="8" y="9.8" width="1" height="2.2"/><rect x="8" y="11" width="4" height="1"/><rect x="12.8" y="7" width="1.1" height="5"/><rect x="14.6" y="8.6" width="1" height="3.4"/><rect x="16" y="7" width="1" height="5"/><rect x="12.8" y="11" width="4.2" height="1"/></g></svg><div class="t" style="left:75px;top:360px;font-size:12px;color:#000;white-space:nowrap;">graphene_Supercell_Standa...</div><svg style="position:absolute;left:52px;top:378px" width="18" height="17" viewBox="0 0 18 17"><path d="M5.5 1.5 H14.5 L16.5 3.5 V15.5 H5.5 Z" fill="#fff" stroke="#6e6e6e"/><rect x="1" y="5" width="16" height="8.6" fill="#6e6e6e"/><rect x="2" y="6" width="15" height="6.6" fill="#1a7fd4"/><g fill="#fff"><rect x="3" y="7" width="1.2" height="5"/><rect x="5.8" y="7" width="1.2" height="5"/><rect x="3" y="9" width="4" height="1"/><rect x="8" y="7" width="3.5" height="1"/><rect x="10.6" y="7" width="1" height="2.6"/><rect x="8.6" y="9.2" width="2.8" height="1"/><rect x="8" y="9.8" width="1" height="2.2"/><rect x="8" y="11" width="4" height="1"/><rect x="12.8" y="7" width="1.1" height="5"/><rect x="14.6" y="8.6" width="1" height="3.4"/><rect x="16" y="7" width="1" height="5"/><rect x="12.8" y="11" width="4.2" height="1"/></g></svg><div class="t" style="left:75px;top:379px;font-size:12px;color:#000;white-space:nowrap;">MoS2.hzw</div><svg style="position:absolute;left:37px;top:400px" width="8" height="10" viewBox="0 0 8 10"><path d="M1.5 0.5 L6 5 L1.5 9.5 Z" fill="none" stroke="#9a9a9a"/></svg><svg style="position:absolute;left:52px;top:397px" width="16" height="16" viewBox="0 0 16 16"><path d="M1 3 H6 L7 5 H15 V15 H1 Z" fill="#e8b84a"/><path d="M3 5 H11 V15 H3 Z" fill="#f4e0a0"/><path d="M5 6 L12 4 V15 L5 15 Z" fill="#f0c860"/></svg><div class="t" style="left:75px;top:398px;font-size:12px;color:#000;white-space:nowrap;">MoS2</div><svg style="position:absolute;left:52px;top:416px" width="18" height="17" viewBox="0 0 18 17"><path d="M5.5 1.5 H14.5 L16.5 3.5 V15.5 H5.5 Z" fill="#fff" stroke="#6e6e6e"/><rect x="1" y="5" width="16" height="8.6" fill="#6e6e6e"/><rect x="2" y="6" width="15" height="6.6" fill="#1a7fd4"/><g fill="#fff"><rect x="3" y="7" width="1.2" height="5"/><rect x="5.8" y="7" width="1.2" height="5"/><rect x="3" y="9" width="4" height="1"/><rect x="8" y="7" width="3.5" height="1"/><rect x="10.6" y="7" width="1" height="2.6"/><rect x="8.6" y="9.2" width="2.8" height="1"/><rect x="8" y="9.8" width="1" height="2.2"/><rect x="8" y="11" width="4" height="1"/><rect x="12.8" y="7" width="1.1" height="5"/><rect x="14.6" y="8.6" width="1" height="3.4"/><rect x="16" y="7" width="1" height="5"/><rect x="12.8" y="11" width="4.2" height="1"/></g></svg><div class="t" style="left:75px;top:417px;font-size:12px;color:#000;white-space:nowrap;">Au-Alkanethiol-Au_bent.hzw</div><svg style="position:absolute;left:52px;top:435px" width="18" height="17" viewBox="0 0 18 17"><path d="M5.5 1.5 H14.5 L16.5 3.5 V15.5 H5.5 Z" fill="#fff" stroke="#6e6e6e"/><rect x="1" y="5" width="16" height="8.6" fill="#6e6e6e"/><rect x="2" y="6" width="15" height="6.6" fill="#1a7fd4"/><g fill="#fff"><rect x="3" y="7" width="1.2" height="5"/><rect x="5.8" y="7" width="1.2" height="5"/><rect x="3" y="9" width="4" height="1"/><rect x="8" y="7" width="3.5" height="1"/><rect x="10.6" y="7" width="1" height="2.6"/><rect x="8.6" y="9.2" width="2.8" height="1"/><rect x="8" y="9.8" width="1" height="2.2"/><rect x="8" y="11" width="4" height="1"/><rect x="12.8" y="7" width="1.1" height="5"/><rect x="14.6" y="8.6" width="1" height="3.4"/><rect x="16" y="7" width="1" height="5"/><rect x="12.8" y="11" width="4.2" height="1"/></g></svg><div class="t" style="left:75px;top:436px;font-size:12px;color:#000;white-space:nowrap;">GaSe.hzw</div><svg style="position:absolute;left:52px;top:454px" width="18" height="17" viewBox="0 0 18 17"><path d="M5.5 1.5 H14.5 L16.5 3.5 V15.5 H5.5 Z" fill="#fff" stroke="#6e6e6e"/><rect x="1" y="5" width="16" height="8.6" fill="#6e6e6e"/><rect x="2" y="6" width="15" height="6.6" fill="#1a7fd4"/><g fill="#fff"><rect x="3" y="7" width="1.2" height="5"/><rect x="5.8" y="7" width="1.2" height="5"/><rect x="3" y="9" width="4" height="1"/><rect x="8" y="7" width="3.5" height="1"/><rect x="10.6" y="7" width="1" height="2.6"/><rect x="8.6" y="9.2" width="2.8" height="1"/><rect x="8" y="9.8" width="1" height="2.2"/><rect x="8" y="11" width="4" height="1"/><rect x="12.8" y="7" width="1.1" height="5"/><rect x="14.6" y="8.6" width="1" height="3.4"/><rect x="16" y="7" width="1" height="5"/><rect x="12.8" y="11" width="4.2" height="1"/></g></svg><div class="t" style="left:75px;top:455px;font-size:12px;color:#000;white-space:nowrap;">C5H17AlN2O8P2.hzw</div><div style="left:247px;top:111px;width:17px;height:364px;background:linear-gradient(90deg,#e8e8e8,#f4f4f4 40%,#f0f0f0);border-left:1px solid #e0e0e0;box-sizing:border-box;"></div><svg style="position:absolute;left:251px;top:115px" width="9" height="6" viewBox="0 0 9 6"><path d="M0.5 5 L4.5 1 L8.5 5 Z" fill="#404040"/></svg><div style="left:248px;top:236px;width:15px;height:221px;background:linear-gradient(90deg,#f2f2f2,#e6e6e6 50%,#d6d6d6);border:1px solid #a8a8a8;border-radius:2px;box-sizing:border-box;"></div><div style="left:252px;top:343px;width:7px;height:1px;background:#777;"></div><div style="left:252px;top:346px;width:7px;height:1px;background:#777;"></div><div style="left:252px;top:349px;width:7px;height:1px;background:#777;"></div><div style="left:10px;top:475px;width:254px;height:18px;background:linear-gradient(#ececec,#f5f5f5);"></div><svg style="position:absolute;left:13px;top:480px" width="6" height="9" viewBox="0 0 6 9"><path d="M5 0.5 L1 4.5 L5 8.5 Z" fill="#a0a0a0"/></svg><svg style="position:absolute;left:236px;top:480px" width="6" height="9" viewBox="0 0 6 9"><path d="M1 0.5 L5 4.5 L1 8.5 Z" fill="#a0a0a0"/></svg><div style="left:8px;top:501px;width:258px;height:18px;background:#dadada;border:1px solid #cacaca;box-sizing:border-box;"></div><div class="t" style="left:10px;top:503px;font-family:'Liberation Mono', monospace;font-size:11.5px;letter-spacing:-0.8px;color:#000;">Properties</div><svg style="position:absolute;left:236px;top:505px" width="10" height="10" viewBox="0 0 10 10"><rect x="3.5" y="0.5" width="6" height="5" fill="none" stroke="#000"/><rect x="3.5" y="0.5" width="6" height="1.5" fill="#000"/><rect x="0.5" y="3.5" width="6" height="6" fill="#dadada" stroke="#000"/><rect x="0.5" y="3.5" width="6" height="1.5" fill="#000"/></svg><svg style="position:absolute;left:252px;top:505px" width="10" height="10" viewBox="0 0 10 10"><path d="M1 1 L9 9 M9 1 L1 9" stroke="#000" stroke-width="1.6"/></svg><div style="left:9px;top:522px;width:255px;height:20px;background:linear-gradient(#f6f6f6,#ececec);border:1px solid #c4c4c4;border-radius:3px;box-sizing:border-box;"></div><div class="t" style="left:12px;top:525px;font-family:'Liberation Mono', monospace;font-size:11px;letter-spacing:-0.6px;color:#808080;">Symmetry System</div><svg style="position:absolute;left:250px;top:529px" width="10" height="6" viewBox="0 0 10 6"><path d="M0 0 H10 L5 6 Z" fill="#8a8a8a"/></svg><div style="left:9px;top:543px;width:256px;height:263px;background:#c7edcc;border:1px solid #8e9aa8;box-sizing:border-box;"></div><div style="left:10px;top:544px;width:254px;height:25px;background:linear-gradient(#ffffff 0%,#ffffff 45%,#f1f2f4 50%,#eef0f3 100%);border-bottom:1px solid #d5d5d5;box-sizing:border-box;"></div><div style="left:109px;top:544px;width:1px;height:25px;background:#dcdcdc;"></div><div class="t" style="left:29px;top:550px;font-size:13px;color:#000;">Properties</div><div class="t" style="left:171px;top:550px;font-size:13px;color:#000;">Value</div><div style="left:10px;top:598px;width:254px;height:1px;background:#a9c8ad;"></div><div style="left:109px;top:569px;width:1px;height:30px;background:#a9c8ad;"></div><div class="t" style="left:13px;top:577px;font-size:11.5px;line-height:14px;color:#7a7a7a;white-space:nowrap;">VectorA (xyz)</div><div class="t" style="left:113px;top:577px;font-size:11px;line-height:14px;color:#7a7a7a;white-space:nowrap;">7.878320 0.000000 0.000000</div><div style="left:10px;top:628px;width:254px;height:1px;background:#a9c8ad;"></div><div style="left:109px;top:599px;width:1px;height:30px;background:#a9c8ad;"></div><div class="t" style="left:13px;top:607px;font-size:11.5px;line-height:14px;color:#7a7a7a;white-space:nowrap;">VectorB (xyz)</div><div class="t" style="left:113px;top:607px;font-size:11px;line-height:14px;color:#7a7a7a;white-space:nowrap;">0.000000 10.468901 0.000000</div><div style="left:10px;top:658px;width:254px;height:1px;background:#a9c8ad;"></div><div style="left:109px;top:629px;width:1px;height:30px;background:#a9c8ad;"></div><div class="t" style="left:13px;top:637px;font-size:11.5px;line-height:14px;color:#7a7a7a;white-space:nowrap;">VectorC (xyz)</div><div class="t" style="left:113px;top:630px;font-size:11px;line-height:14px;color:#7a7a7a;white-space:nowrap;">-1.441488 0.000000<br>16.003251</div><div style="left:10px;top:688px;width:254px;height:1px;background:#a9c8ad;"></div><div style="left:109px;top:659px;width:1px;height:30px;background:#a9c8ad;"></div><div class="t" style="left:13px;top:659px;font-size:11.5px;line-height:14px;color:#7a7a7a;white-space:nowrap;">Total Num of<br>Atoms:</div><div class="t" style="left:113px;top:667px;font-size:11px;line-height:14px;color:#7a7a7a;white-space:nowrap;">140</div><div style="left:10px;top:718px;width:254px;height:1px;background:#a9c8ad;"></div><div style="left:109px;top:689px;width:1px;height:30px;background:#a9c8ad;"></div><div class="t" style="left:13px;top:689px;font-size:11.5px;line-height:14px;color:#7a7a7a;white-space:nowrap;">Total Area of<br>Lattice:</div><div class="t" style="left:113px;top:697px;font-size:11px;line-height:14px;color:#7a7a7a;white-space:nowrap;">1319.905779</div><div style="left:270px;top:87px;width:1034px;height:454px;background:#000;overflow:hidden;"><svg style="position:absolute;left:0;top:0" width="1034" height="454" viewBox="270 87 1034 454"><defs><radialGradient id="gO" cx="0.5" cy="0.5" r="0.55" fx="0.48" fy="0.5"><stop offset="0" stop-color="#ff8080"/><stop offset="0.25" stop-color="#e01818"/><stop offset="0.78" stop-color="#b00000"/><stop offset="1" stop-color="#5a0000"/></radialGradient><radialGradient id="gH" cx="0.5" cy="0.5" r="0.55" fx="0.48" fy="0.5"><stop offset="0" stop-color="#ffffff"/><stop offset="0.25" stop-color="#e2e2e2"/><stop offset="0.78" stop-color="#bdbdbd"/><stop offset="1" stop-color="#6a6a6a"/></radialGradient><radialGradient id="gC" cx="0.5" cy="0.5" r="0.55" fx="0.48" fy="0.5"><stop offset="0" stop-color="#c8c8c8"/><stop offset="0.25" stop-color="#8c8c8c"/><stop offset="0.78" stop-color="#6e6e6e"/><stop offset="1" stop-color="#3a3a3a"/></radialGradient><radialGradient id="gN" cx="0.5" cy="0.5" r="0.55" fx="0.48" fy="0.5"><stop offset="0" stop-color="#d8d8ff"/><stop offset="0.25" stop-color="#8a8ad0"/><stop offset="0.78" stop-color="#6a6ab0"/><stop offset="1" stop-color="#36366a"/></radialGradient><radialGradient id="gP" cx="0.5" cy="0.5" r="0.55" fx="0.48" fy="0.5"><stop offset="0" stop-color="#ffc070"/><stop offset="0.25" stop-color="#e08420"/><stop offset="0.78" stop-color="#c06810"/><stop offset="1" stop-color="#6a3400"/></radialGradient><radialGradient id="gA" cx="0.5" cy="0.5" r="0.55" fx="0.48" fy="0.5"><stop offset="0" stop-color="#f4e8e8"/><stop offset="0.25" stop-color="#c0a8a8"/><stop offset="0.78" stop-color="#a08888"/><stop offset="1" stop-color="#5a4646"/></radialGradient><radialGradient id="hl"><stop offset="0" stop-color="#ffffff" stop-opacity="1"/><stop offset="0.45" stop-color="#ffffff" stop-opacity="0.75"/><stop offset="1" stop-color="#ffffff" stop-opacity="0"/></radialGradient></defs><rect x="514.5" y="120.5" width="547" height="358" fill="none" stroke="#ffffff" stroke-width="1"/><line x1="632" y1="267" x2="634.5" y2="292.0" stroke="#8a8a8a" stroke-width="5"/><line x1="634.5" y1="292.0" x2="637" y2="317" stroke="#8a8a8a" stroke-width="5"/><line x1="581" y1="238" x2="606.5" y2="252.5" stroke="#8a8a8a" stroke-width="5"/><line x1="606.5" y1="252.5" x2="632" y2="267" stroke="#8a8a8a" stroke-width="5"/><line x1="867" y1="181" x2="887.0" y2="166.5" stroke="#8a8a8a" stroke-width="5"/><line x1="887.0" y1="166.5" x2="907" y2="152" stroke="#8a8a8a" stroke-width="5"/><line x1="941" y1="284" x2="942.0" y2="308.0" stroke="#8a8a8a" stroke-width="5"/><line x1="942.0" y1="308.0" x2="943" y2="332" stroke="#8a8a8a" stroke-width="5"/><line x1="943" y1="332" x2="963.0" y2="346.0" stroke="#8a8a8a" stroke-width="5"/><line x1="963.0" y1="346.0" x2="983" y2="360" stroke="#8a8a8a" stroke-width="5"/><line x1="668" y1="136" x2="668.0" y2="124.0" stroke="#8a8a8a" stroke-width="5"/><line x1="668.0" y1="124.0" x2="668" y2="112" stroke="#8a8a8a" stroke-width="5"/><line x1="907" y1="152" x2="907.0" y2="140.0" stroke="#8a8a8a" stroke-width="5"/><line x1="907.0" y1="140.0" x2="907" y2="128" stroke="#8a8a8a" stroke-width="5"/><line x1="670" y1="446" x2="685.0" y2="435.5" stroke="#8a8a8a" stroke-width="5"/><line x1="685.0" y1="435.5" x2="700" y2="425" stroke="#8a8a8a" stroke-width="5"/><line x1="670" y1="446" x2="670.0" y2="459.5" stroke="#8a8a8a" stroke-width="5"/><line x1="670.0" y1="459.5" x2="670" y2="473" stroke="#8a8a8a" stroke-width="5"/><line x1="908" y1="459" x2="908.0" y2="472.0" stroke="#8a8a8a" stroke-width="5"/><line x1="908.0" y1="472.0" x2="908" y2="485" stroke="#8a8a8a" stroke-width="5"/><line x1="941" y1="284" x2="959.5" y2="272.5" stroke="#8a8a8a" stroke-width="5"/><line x1="959.5" y1="272.5" x2="978" y2="261" stroke="#8a8a8a" stroke-width="5"/><line x1="612" y1="217" x2="596.5" y2="227.5" stroke="#7070b0" stroke-width="5"/><line x1="596.5" y1="227.5" x2="581" y2="238" stroke="#8a8a8a" stroke-width="5"/><line x1="550" y1="130" x2="538.5" y2="131.5" stroke="#d40000" stroke-width="6"/><line x1="538.5" y1="131.5" x2="527" y2="133" stroke="#d40000" stroke-width="6"/><line x1="550" y1="130" x2="560.0" y2="123.0" stroke="#d40000" stroke-width="6"/><line x1="560.0" y1="123.0" x2="570" y2="116" stroke="#d40000" stroke-width="6"/><line x1="632" y1="127" x2="622.0" y2="120.5" stroke="#d40000" stroke-width="6"/><line x1="622.0" y1="120.5" x2="612" y2="114" stroke="#d40000" stroke-width="6"/><line x1="546" y1="157" x2="548.0" y2="143.5" stroke="#d40000" stroke-width="6"/><line x1="548.0" y1="143.5" x2="550" y2="130" stroke="#d40000" stroke-width="6"/><line x1="546" y1="157" x2="536.5" y2="177.0" stroke="#d40000" stroke-width="6"/><line x1="536.5" y1="177.0" x2="527" y2="197" stroke="#e07a10" stroke-width="6"/><line x1="527" y1="197" x2="519.5" y2="191.0" stroke="#e07a10" stroke-width="5"/><line x1="519.5" y1="191.0" x2="512" y2="185" stroke="#e07a10" stroke-width="5"/><line x1="527" y1="197" x2="519.5" y2="205.0" stroke="#e07a10" stroke-width="5"/><line x1="519.5" y1="205.0" x2="512" y2="213" stroke="#e07a10" stroke-width="5"/><line x1="527" y1="197" x2="538.5" y2="206.0" stroke="#e07a10" stroke-width="5"/><line x1="538.5" y1="206.0" x2="550" y2="215" stroke="#e07a10" stroke-width="5"/><line x1="766" y1="195" x2="783.5" y2="208.5" stroke="#d40000" stroke-width="6"/><line x1="783.5" y1="208.5" x2="801" y2="222" stroke="#e07a10" stroke-width="6"/><line x1="839" y1="192" x2="820.0" y2="207.0" stroke="#d40000" stroke-width="6"/><line x1="820.0" y1="207.0" x2="801" y2="222" stroke="#e07a10" stroke-width="6"/><line x1="801" y1="222" x2="794.0" y2="227.5" stroke="#e07a10" stroke-width="6"/><line x1="794.0" y1="227.5" x2="787" y2="233" stroke="#e07a10" stroke-width="6"/><line x1="988" y1="139" x2="979.0" y2="134.5" stroke="#e07a10" stroke-width="5"/><line x1="979.0" y1="134.5" x2="970" y2="130" stroke="#e07a10" stroke-width="5"/><line x1="988" y1="139" x2="997.0" y2="133.0" stroke="#e07a10" stroke-width="5"/><line x1="997.0" y1="133.0" x2="1006" y2="127" stroke="#e07a10" stroke-width="5"/><line x1="988" y1="139" x2="984.5" y2="161.5" stroke="#e07a10" stroke-width="6"/><line x1="984.5" y1="161.5" x2="981" y2="184" stroke="#d40000" stroke-width="6"/><line x1="1004" y1="152" x2="1024.5" y2="143.0" stroke="#d40000" stroke-width="6"/><line x1="1024.5" y1="143.0" x2="1045" y2="134" stroke="#c8a8a8" stroke-width="6"/><line x1="1045" y1="134" x2="1042.5" y2="122.0" stroke="#c8a8a8" stroke-width="5"/><line x1="1042.5" y1="122.0" x2="1040" y2="110" stroke="#c8a8a8" stroke-width="5"/><line x1="1045" y1="134" x2="1057.5" y2="133.5" stroke="#c8a8a8" stroke-width="5"/><line x1="1057.5" y1="133.5" x2="1070" y2="133" stroke="#c8a8a8" stroke-width="5"/><line x1="1045" y1="134" x2="1046.0" y2="155.5" stroke="#c8a8a8" stroke-width="6"/><line x1="1046.0" y1="155.5" x2="1047" y2="177" stroke="#d40000" stroke-width="6"/><line x1="1040" y1="224" x2="1049.0" y2="218.0" stroke="#d40000" stroke-width="6"/><line x1="1049.0" y1="218.0" x2="1058" y2="212" stroke="#d40000" stroke-width="6"/><line x1="708" y1="236" x2="711.0" y2="257.5" stroke="#d40000" stroke-width="6"/><line x1="711.0" y1="257.5" x2="714" y2="279" stroke="#e07a10" stroke-width="6"/><line x1="714" y1="279" x2="722.5" y2="273.0" stroke="#e07a10" stroke-width="6"/><line x1="722.5" y1="273.0" x2="731" y2="267" stroke="#d40000" stroke-width="6"/><line x1="714" y1="279" x2="702.0" y2="286.0" stroke="#e07a10" stroke-width="6"/><line x1="702.0" y1="286.0" x2="690" y2="293" stroke="#d40000" stroke-width="6"/><line x1="714" y1="279" x2="732.5" y2="294.0" stroke="#e07a10" stroke-width="6"/><line x1="732.5" y1="294.0" x2="751" y2="309" stroke="#d40000" stroke-width="6"/><line x1="771" y1="285" x2="751.0" y2="276.0" stroke="#c8a8a8" stroke-width="6"/><line x1="751.0" y1="276.0" x2="731" y2="267" stroke="#d40000" stroke-width="6"/><line x1="771" y1="285" x2="772.5" y2="263.5" stroke="#c8a8a8" stroke-width="6"/><line x1="772.5" y1="263.5" x2="774" y2="242" stroke="#d40000" stroke-width="6"/><line x1="771" y1="285" x2="798.5" y2="287.0" stroke="#c8a8a8" stroke-width="6"/><line x1="798.5" y1="287.0" x2="826" y2="289" stroke="#d40000" stroke-width="6"/><line x1="805" y1="314" x2="778.0" y2="311.5" stroke="#c8a8a8" stroke-width="6"/><line x1="778.0" y1="311.5" x2="751" y2="309" stroke="#d40000" stroke-width="6"/><line x1="805" y1="314" x2="812.5" y2="288.0" stroke="#c8a8a8" stroke-width="6"/><line x1="812.5" y1="288.0" x2="820" y2="262" stroke="#d40000" stroke-width="6"/><line x1="805" y1="314" x2="825.5" y2="322.5" stroke="#c8a8a8" stroke-width="6"/><line x1="825.5" y1="322.5" x2="846" y2="331" stroke="#d40000" stroke-width="6"/><line x1="805" y1="314" x2="804.0" y2="335.0" stroke="#c8a8a8" stroke-width="6"/><line x1="804.0" y1="335.0" x2="803" y2="356" stroke="#d40000" stroke-width="6"/><line x1="826" y1="289" x2="844.0" y2="303.5" stroke="#d40000" stroke-width="6"/><line x1="844.0" y1="303.5" x2="862" y2="318" stroke="#e07a10" stroke-width="6"/><line x1="862" y1="318" x2="884.0" y2="306.0" stroke="#e07a10" stroke-width="6"/><line x1="884.0" y1="306.0" x2="906" y2="294" stroke="#d40000" stroke-width="6"/><line x1="862" y1="318" x2="865.0" y2="340.5" stroke="#e07a10" stroke-width="6"/><line x1="865.0" y1="340.5" x2="868" y2="363" stroke="#d40000" stroke-width="6"/><line x1="751" y1="309" x2="753.5" y2="323.5" stroke="#d40000" stroke-width="6"/><line x1="753.5" y1="323.5" x2="756" y2="338" stroke="#d40000" stroke-width="6"/><line x1="756" y1="338" x2="765.5" y2="357.5" stroke="#d40000" stroke-width="6"/><line x1="765.5" y1="357.5" x2="775" y2="377" stroke="#e07a10" stroke-width="6"/><line x1="775" y1="377" x2="789.0" y2="366.5" stroke="#e07a10" stroke-width="6"/><line x1="789.0" y1="366.5" x2="803" y2="356" stroke="#d40000" stroke-width="6"/><line x1="775" y1="377" x2="792.0" y2="390.5" stroke="#e07a10" stroke-width="6"/><line x1="792.0" y1="390.5" x2="809" y2="404" stroke="#d40000" stroke-width="6"/><line x1="775" y1="377" x2="762.5" y2="386.0" stroke="#e07a10" stroke-width="6"/><line x1="762.5" y1="386.0" x2="750" y2="395" stroke="#e07a10" stroke-width="6"/><line x1="801" y1="222" x2="810.5" y2="242.0" stroke="#e07a10" stroke-width="6"/><line x1="810.5" y1="242.0" x2="820" y2="262" stroke="#d40000" stroke-width="6"/><line x1="1011" y1="373" x2="1029.5" y2="387.0" stroke="#d40000" stroke-width="6"/><line x1="1029.5" y1="387.0" x2="1048" y2="401" stroke="#e07a10" stroke-width="6"/><line x1="1048" y1="401" x2="1057.0" y2="395.0" stroke="#e07a10" stroke-width="5"/><line x1="1057.0" y1="395.0" x2="1066" y2="389" stroke="#e07a10" stroke-width="5"/><line x1="1048" y1="401" x2="1038.5" y2="420.5" stroke="#e07a10" stroke-width="6"/><line x1="1038.5" y1="420.5" x2="1029" y2="440" stroke="#d40000" stroke-width="6"/><line x1="1029" y1="440" x2="1033.5" y2="454.0" stroke="#d40000" stroke-width="6"/><line x1="1033.5" y1="454.0" x2="1038" y2="468" stroke="#d40000" stroke-width="6"/><line x1="1038" y1="468" x2="1045.0" y2="467.0" stroke="#d40000" stroke-width="6"/><line x1="1045.0" y1="467.0" x2="1052" y2="466" stroke="#d40000" stroke-width="6"/><line x1="1025" y1="469" x2="1016.0" y2="477.0" stroke="#d40000" stroke-width="6"/><line x1="1016.0" y1="477.0" x2="1007" y2="485" stroke="#d40000" stroke-width="6"/><line x1="944" y1="473" x2="954.5" y2="479.0" stroke="#d40000" stroke-width="6"/><line x1="954.5" y1="479.0" x2="965" y2="485" stroke="#d40000" stroke-width="6"/><line x1="535" y1="373" x2="527.5" y2="379.0" stroke="#d40000" stroke-width="6"/><line x1="527.5" y1="379.0" x2="520" y2="385" stroke="#d40000" stroke-width="6"/><line x1="528" y1="421" x2="520.0" y2="414.5" stroke="#d40000" stroke-width="6"/><line x1="520.0" y1="414.5" x2="512" y2="408" stroke="#d40000" stroke-width="6"/><line x1="528" y1="421" x2="529.5" y2="442.5" stroke="#d40000" stroke-width="6"/><line x1="529.5" y1="442.5" x2="531" y2="464" stroke="#c8a8a8" stroke-width="6"/><line x1="531" y1="464" x2="550.5" y2="455.0" stroke="#c8a8a8" stroke-width="6"/><line x1="550.5" y1="455.0" x2="570" y2="446" stroke="#d40000" stroke-width="6"/><line x1="531" y1="464" x2="518.5" y2="464.5" stroke="#c8a8a8" stroke-width="5"/><line x1="518.5" y1="464.5" x2="506" y2="465" stroke="#c8a8a8" stroke-width="5"/><line x1="531" y1="464" x2="534.5" y2="477.0" stroke="#c8a8a8" stroke-width="5"/><line x1="534.5" y1="477.0" x2="538" y2="490" stroke="#c8a8a8" stroke-width="5"/><line x1="594" y1="414" x2="591.0" y2="436.0" stroke="#d40000" stroke-width="6"/><line x1="591.0" y1="436.0" x2="588" y2="458" stroke="#e07a10" stroke-width="6"/><line x1="570" y1="446" x2="579.0" y2="452.0" stroke="#d40000" stroke-width="6"/><line x1="579.0" y1="452.0" x2="588" y2="458" stroke="#e07a10" stroke-width="6"/><line x1="588" y1="458" x2="579.0" y2="466.5" stroke="#e07a10" stroke-width="5"/><line x1="579.0" y1="466.5" x2="570" y2="475" stroke="#e07a10" stroke-width="5"/><line x1="588" y1="458" x2="599.0" y2="465.5" stroke="#e07a10" stroke-width="5"/><line x1="599.0" y1="465.5" x2="610" y2="473" stroke="#e07a10" stroke-width="5"/><circle cx="638.0" cy="147.8" r="14.7" fill="url(#gH)" stroke="#1a1a1a" stroke-opacity="0.55" stroke-width="0.7"/><ellipse cx="637.2" cy="148.1" rx="5.4" ry="2.4" transform="rotate(35 637.2 148.1)" fill="url(#hl)"/><circle cx="631.8" cy="126.8" r="13.7" fill="url(#gO)" stroke="#1a1a1a" stroke-opacity="0.55" stroke-width="0.7"/><ellipse cx="631.1" cy="127.1" rx="5.0" ry="2.2" transform="rotate(35 631.1 127.1)" fill="url(#hl)"/><circle cx="683.0" cy="134.0" r="14.7" fill="url(#gH)" stroke="#1a1a1a" stroke-opacity="0.55" stroke-width="0.7"/><ellipse cx="682.2" cy="134.3" rx="5.4" ry="2.4" transform="rotate(35 682.2 134.3)" fill="url(#hl)"/><circle cx="667.7" cy="136.3" r="15.7" fill="url(#gC)" stroke="#1a1a1a" stroke-opacity="0.55" stroke-width="0.7"/><ellipse cx="666.9" cy="136.6" rx="5.8" ry="2.6" transform="rotate(35 666.9 136.6)" fill="url(#hl)"/><circle cx="669.6" cy="153.5" r="14.7" fill="url(#gH)" stroke="#1a1a1a" stroke-opacity="0.55" stroke-width="0.7"/><ellipse cx="668.9" cy="153.8" rx="5.4" ry="2.4" transform="rotate(35 668.9 153.8)" fill="url(#hl)"/><circle cx="550.6" cy="130.0" r="13.7" fill="url(#gO)" stroke="#1a1a1a" stroke-opacity="0.55" stroke-width="0.7"/><ellipse cx="549.9" cy="130.3" rx="5.0" ry="2.2" transform="rotate(35 549.9 130.3)" fill="url(#hl)"/><circle cx="546.4" cy="157.3" r="13.7" fill="url(#gO)" stroke="#1a1a1a" stroke-opacity="0.55" stroke-width="0.7"/><ellipse cx="545.7" cy="157.6" rx="5.0" ry="2.2" transform="rotate(35 545.7 157.6)" fill="url(#hl)"/><circle cx="527.3" cy="197.5" r="17.7" fill="url(#gP)" stroke="#1a1a1a" stroke-opacity="0.55" stroke-width="0.7"/><ellipse cx="526.4" cy="197.9" rx="6.5" ry="2.9" transform="rotate(35 526.4 197.9)" fill="url(#hl)"/><circle cx="708.0" cy="133.4" r="13.7" fill="url(#gN)" stroke="#1a1a1a" stroke-opacity="0.55" stroke-width="0.7"/><ellipse cx="707.3" cy="133.7" rx="5.0" ry="2.2" transform="rotate(35 707.3 133.7)" fill="url(#hl)"/><circle cx="736.0" cy="155.0" r="14.7" fill="url(#gH)" stroke="#1a1a1a" stroke-opacity="0.55" stroke-width="0.7"/><ellipse cx="735.2" cy="155.3" rx="5.4" ry="2.4" transform="rotate(35 735.2 155.3)" fill="url(#hl)"/><circle cx="704.3" cy="158.3" r="15.7" fill="url(#gC)" stroke="#1a1a1a" stroke-opacity="0.55" stroke-width="0.7"/><ellipse cx="703.5" cy="158.6" rx="5.8" ry="2.6" transform="rotate(35 703.5 158.6)" fill="url(#hl)"/><circle cx="726.3" cy="154.5" r="14.7" fill="url(#gH)" stroke="#1a1a1a" stroke-opacity="0.55" stroke-width="0.7"/><ellipse cx="725.5" cy="154.8" rx="5.4" ry="2.4" transform="rotate(35 725.5 154.8)" fill="url(#hl)"/><circle cx="701.5" cy="190.8" r="14.7" fill="url(#gH)" stroke="#1a1a1a" stroke-opacity="0.55" stroke-width="0.7"/><ellipse cx="700.8" cy="191.1" rx="5.4" ry="2.4" transform="rotate(35 700.8 191.1)" fill="url(#hl)"/><circle cx="592.0" cy="203.0" r="14.7" fill="url(#gH)" stroke="#1a1a1a" stroke-opacity="0.55" stroke-width="0.7"/><ellipse cx="591.2" cy="203.3" rx="5.4" ry="2.4" transform="rotate(35 591.2 203.3)" fill="url(#hl)"/><circle cx="598.0" cy="217.0" r="14.7" fill="url(#gH)" stroke="#1a1a1a" stroke-opacity="0.55" stroke-width="0.7"/><ellipse cx="597.2" cy="217.3" rx="5.4" ry="2.4" transform="rotate(35 597.2 217.3)" fill="url(#hl)"/><circle cx="616.0" cy="187.0" r="14.7" fill="url(#gH)" stroke="#1a1a1a" stroke-opacity="0.55" stroke-width="0.7"/><ellipse cx="615.2" cy="187.3" rx="5.4" ry="2.4" transform="rotate(35 615.2 187.3)" fill="url(#hl)"/><circle cx="568.0" cy="226.0" r="13.7" fill="url(#gO)" stroke="#1a1a1a" stroke-opacity="0.55" stroke-width="0.7"/><ellipse cx="567.3" cy="226.3" rx="5.0" ry="2.2" transform="rotate(35 567.3 226.3)" fill="url(#hl)"/><circle cx="550.0" cy="224.0" r="14.7" fill="url(#gH)" stroke="#1a1a1a" stroke-opacity="0.55" stroke-width="0.7"/><ellipse cx="549.2" cy="224.3" rx="5.4" ry="2.4" transform="rotate(35 549.2 224.3)" fill="url(#hl)"/><circle cx="596.0" cy="240.0" r="15.7" fill="url(#gC)" stroke="#1a1a1a" stroke-opacity="0.55" stroke-width="0.7"/><ellipse cx="595.2" cy="240.3" rx="5.8" ry="2.6" transform="rotate(35 595.2 240.3)" fill="url(#hl)"/><circle cx="560.7" cy="251.5" r="14.7" fill="url(#gH)" stroke="#1a1a1a" stroke-opacity="0.55" stroke-width="0.7"/><ellipse cx="560.0" cy="251.8" rx="5.4" ry="2.4" transform="rotate(35 560.0 251.8)" fill="url(#hl)"/><circle cx="580.8" cy="237.6" r="15.7" fill="url(#gC)" stroke="#1a1a1a" stroke-opacity="0.55" stroke-width="0.7"/><ellipse cx="580.0" cy="237.9" rx="5.8" ry="2.6" transform="rotate(35 580.0 237.9)" fill="url(#hl)"/><circle cx="612.3" cy="216.6" r="13.7" fill="url(#gN)" stroke="#1a1a1a" stroke-opacity="0.55" stroke-width="0.7"/><ellipse cx="611.6" cy="216.9" rx="5.0" ry="2.2" transform="rotate(35 611.6 216.9)" fill="url(#hl)"/><circle cx="658.2" cy="261.0" r="14.7" fill="url(#gH)" stroke="#1a1a1a" stroke-opacity="0.55" stroke-width="0.7"/><ellipse cx="657.5" cy="261.3" rx="5.4" ry="2.4" transform="rotate(35 657.5 261.3)" fill="url(#hl)"/><circle cx="632.4" cy="266.8" r="15.7" fill="url(#gC)" stroke="#1a1a1a" stroke-opacity="0.55" stroke-width="0.7"/><ellipse cx="631.6" cy="267.1" rx="5.8" ry="2.6" transform="rotate(35 631.6 267.1)" fill="url(#hl)"/><circle cx="645.7" cy="253.4" r="14.7" fill="url(#gH)" stroke="#1a1a1a" stroke-opacity="0.55" stroke-width="0.7"/><ellipse cx="645.0" cy="253.7" rx="5.4" ry="2.4" transform="rotate(35 645.0 253.7)" fill="url(#hl)"/><circle cx="639.0" cy="230.0" r="14.7" fill="url(#gH)" stroke="#1a1a1a" stroke-opacity="0.55" stroke-width="0.7"/><ellipse cx="638.2" cy="230.3" rx="5.4" ry="2.4" transform="rotate(35 638.2 230.3)" fill="url(#hl)"/><circle cx="582.7" cy="290.6" r="14.7" fill="url(#gH)" stroke="#1a1a1a" stroke-opacity="0.55" stroke-width="0.7"/><ellipse cx="582.0" cy="290.9" rx="5.4" ry="2.4" transform="rotate(35 582.0 290.9)" fill="url(#hl)"/><circle cx="577.9" cy="270.6" r="14.7" fill="url(#gH)" stroke="#1a1a1a" stroke-opacity="0.55" stroke-width="0.7"/><ellipse cx="577.1" cy="270.9" rx="5.4" ry="2.4" transform="rotate(35 577.1 270.9)" fill="url(#hl)"/><circle cx="821.9" cy="194.6" r="14.7" fill="url(#gH)" stroke="#1a1a1a" stroke-opacity="0.55" stroke-width="0.7"/><ellipse cx="821.1" cy="194.9" rx="5.4" ry="2.4" transform="rotate(35 821.1 194.9)" fill="url(#hl)"/><circle cx="752.0" cy="212.7" r="14.7" fill="url(#gH)" stroke="#1a1a1a" stroke-opacity="0.55" stroke-width="0.7"/><ellipse cx="751.2" cy="213.0" rx="5.4" ry="2.4" transform="rotate(35 751.2 213.0)" fill="url(#hl)"/><circle cx="766.4" cy="194.6" r="13.7" fill="url(#gO)" stroke="#1a1a1a" stroke-opacity="0.55" stroke-width="0.7"/><ellipse cx="765.7" cy="194.9" rx="5.0" ry="2.2" transform="rotate(35 765.7 194.9)" fill="url(#hl)"/><circle cx="800.8" cy="222.3" r="17.7" fill="url(#gP)" stroke="#1a1a1a" stroke-opacity="0.55" stroke-width="0.7"/><ellipse cx="799.9" cy="222.7" rx="6.5" ry="2.9" transform="rotate(35 799.9 222.7)" fill="url(#hl)"/><circle cx="708.2" cy="236.0" r="13.7" fill="url(#gO)" stroke="#1a1a1a" stroke-opacity="0.55" stroke-width="0.7"/><ellipse cx="707.5" cy="236.3" rx="5.0" ry="2.2" transform="rotate(35 707.5 236.3)" fill="url(#hl)"/><circle cx="774.0" cy="242.0" r="13.7" fill="url(#gO)" stroke="#1a1a1a" stroke-opacity="0.55" stroke-width="0.7"/><ellipse cx="773.3" cy="242.3" rx="5.0" ry="2.2" transform="rotate(35 773.3 242.3)" fill="url(#hl)"/><circle cx="820.0" cy="262.0" r="13.7" fill="url(#gO)" stroke="#1a1a1a" stroke-opacity="0.55" stroke-width="0.7"/><ellipse cx="819.3" cy="262.3" rx="5.0" ry="2.2" transform="rotate(35 819.3 262.3)" fill="url(#hl)"/><circle cx="851.5" cy="150.6" r="14.7" fill="url(#gH)" stroke="#1a1a1a" stroke-opacity="0.55" stroke-width="0.7"/><ellipse cx="850.8" cy="150.9" rx="5.4" ry="2.4" transform="rotate(35 850.8 150.9)" fill="url(#hl)"/><circle cx="856.3" cy="130.6" r="14.7" fill="url(#gH)" stroke="#1a1a1a" stroke-opacity="0.55" stroke-width="0.7"/><ellipse cx="855.5" cy="130.9" rx="5.4" ry="2.4" transform="rotate(35 855.5 130.9)" fill="url(#hl)"/><circle cx="840.0" cy="169.7" r="14.7" fill="url(#gH)" stroke="#1a1a1a" stroke-opacity="0.55" stroke-width="0.7"/><ellipse cx="839.2" cy="170.0" rx="5.4" ry="2.4" transform="rotate(35 839.2 170.0)" fill="url(#hl)"/><circle cx="839.0" cy="191.7" r="13.7" fill="url(#gO)" stroke="#1a1a1a" stroke-opacity="0.55" stroke-width="0.7"/><ellipse cx="838.3" cy="192.0" rx="5.0" ry="2.2" transform="rotate(35 838.3 192.0)" fill="url(#hl)"/><circle cx="866.8" cy="181.2" r="15.7" fill="url(#gC)" stroke="#1a1a1a" stroke-opacity="0.55" stroke-width="0.7"/><ellipse cx="866.0" cy="181.5" rx="5.8" ry="2.6" transform="rotate(35 866.0 181.5)" fill="url(#hl)"/><circle cx="887.8" cy="202.2" r="13.7" fill="url(#gN)" stroke="#1a1a1a" stroke-opacity="0.55" stroke-width="0.7"/><ellipse cx="887.1" cy="202.5" rx="5.0" ry="2.2" transform="rotate(35 887.1 202.5)" fill="url(#hl)"/><circle cx="871.5" cy="212.7" r="14.7" fill="url(#gH)" stroke="#1a1a1a" stroke-opacity="0.55" stroke-width="0.7"/><ellipse cx="870.8" cy="213.0" rx="5.4" ry="2.4" transform="rotate(35 870.8 213.0)" fill="url(#hl)"/><circle cx="888.7" cy="231.9" r="14.7" fill="url(#gH)" stroke="#1a1a1a" stroke-opacity="0.55" stroke-width="0.7"/><ellipse cx="888.0" cy="232.2" rx="5.4" ry="2.4" transform="rotate(35 888.0 232.2)" fill="url(#hl)"/><circle cx="933.5" cy="157.3" r="14.7" fill="url(#gH)" stroke="#1a1a1a" stroke-opacity="0.55" stroke-width="0.7"/><ellipse cx="932.8" cy="157.6" rx="5.4" ry="2.4" transform="rotate(35 932.8 157.6)" fill="url(#hl)"/><circle cx="906.8" cy="151.6" r="15.7" fill="url(#gC)" stroke="#1a1a1a" stroke-opacity="0.55" stroke-width="0.7"/><ellipse cx="906.0" cy="151.9" rx="5.8" ry="2.6" transform="rotate(35 906.0 151.9)" fill="url(#hl)"/><circle cx="919.2" cy="165.9" r="14.7" fill="url(#gH)" stroke="#1a1a1a" stroke-opacity="0.55" stroke-width="0.7"/><ellipse cx="918.5" cy="166.2" rx="5.4" ry="2.4" transform="rotate(35 918.5 166.2)" fill="url(#hl)"/><circle cx="913.4" cy="189.8" r="14.7" fill="url(#gH)" stroke="#1a1a1a" stroke-opacity="0.55" stroke-width="0.7"/><ellipse cx="912.6" cy="190.1" rx="5.4" ry="2.4" transform="rotate(35 912.6 190.1)" fill="url(#hl)"/><circle cx="988.0" cy="139.2" r="16.7" fill="url(#gP)" stroke="#1a1a1a" stroke-opacity="0.55" stroke-width="0.7"/><ellipse cx="987.1" cy="139.5" rx="6.1" ry="2.7" transform="rotate(35 987.1 139.5)" fill="url(#hl)"/><circle cx="1004.2" cy="151.6" r="13.7" fill="url(#gO)" stroke="#1a1a1a" stroke-opacity="0.55" stroke-width="0.7"/><ellipse cx="1003.5" cy="151.9" rx="5.0" ry="2.2" transform="rotate(35 1003.5 151.9)" fill="url(#hl)"/><circle cx="1045.3" cy="134.4" r="19.2" fill="url(#gA)" stroke="#1a1a1a" stroke-opacity="0.55" stroke-width="0.7"/><ellipse cx="1044.3" cy="134.8" rx="7.0" ry="3.1" transform="rotate(35 1044.3 134.8)" fill="url(#hl)"/><circle cx="981.3" cy="184.0" r="13.7" fill="url(#gO)" stroke="#1a1a1a" stroke-opacity="0.55" stroke-width="0.7"/><ellipse cx="980.6" cy="184.3" rx="5.0" ry="2.2" transform="rotate(35 980.6 184.3)" fill="url(#hl)"/><circle cx="1047.2" cy="177.4" r="13.7" fill="url(#gO)" stroke="#1a1a1a" stroke-opacity="0.55" stroke-width="0.7"/><ellipse cx="1046.5" cy="177.7" rx="5.0" ry="2.2" transform="rotate(35 1046.5 177.7)" fill="url(#hl)"/><circle cx="1026.2" cy="207.0" r="14.7" fill="url(#gH)" stroke="#1a1a1a" stroke-opacity="0.55" stroke-width="0.7"/><ellipse cx="1025.5" cy="207.3" rx="5.4" ry="2.4" transform="rotate(35 1025.5 207.3)" fill="url(#hl)"/><circle cx="1040.5" cy="224.2" r="13.7" fill="url(#gO)" stroke="#1a1a1a" stroke-opacity="0.55" stroke-width="0.7"/><ellipse cx="1039.8" cy="224.5" rx="5.0" ry="2.2" transform="rotate(35 1039.8 224.5)" fill="url(#hl)"/><circle cx="973.6" cy="228.0" r="14.7" fill="url(#gH)" stroke="#1a1a1a" stroke-opacity="0.55" stroke-width="0.7"/><ellipse cx="972.9" cy="228.3" rx="5.4" ry="2.4" transform="rotate(35 972.9 228.3)" fill="url(#hl)"/><circle cx="599.0" cy="339.4" r="15.7" fill="url(#gC)" stroke="#1a1a1a" stroke-opacity="0.55" stroke-width="0.7"/><ellipse cx="598.2" cy="339.7" rx="5.8" ry="2.6" transform="rotate(35 598.2 339.7)" fill="url(#hl)"/><circle cx="565.5" cy="333.6" r="14.7" fill="url(#gH)" stroke="#1a1a1a" stroke-opacity="0.55" stroke-width="0.7"/><ellipse cx="564.8" cy="333.9" rx="5.4" ry="2.4" transform="rotate(35 564.8 333.9)" fill="url(#hl)"/><circle cx="594.1" cy="315.5" r="13.7" fill="url(#gN)" stroke="#1a1a1a" stroke-opacity="0.55" stroke-width="0.7"/><ellipse cx="593.4" cy="315.8" rx="5.0" ry="2.2" transform="rotate(35 593.4 315.8)" fill="url(#hl)"/><circle cx="576.0" cy="333.6" r="14.7" fill="url(#gH)" stroke="#1a1a1a" stroke-opacity="0.55" stroke-width="0.7"/><ellipse cx="575.2" cy="333.9" rx="5.4" ry="2.4" transform="rotate(35 575.2 333.9)" fill="url(#hl)"/><circle cx="632.4" cy="335.5" r="14.7" fill="url(#gH)" stroke="#1a1a1a" stroke-opacity="0.55" stroke-width="0.7"/><ellipse cx="631.6" cy="335.8" rx="5.4" ry="2.4" transform="rotate(35 631.6 335.8)" fill="url(#hl)"/><circle cx="663.9" cy="326.0" r="14.7" fill="url(#gH)" stroke="#1a1a1a" stroke-opacity="0.55" stroke-width="0.7"/><ellipse cx="663.1" cy="326.3" rx="5.4" ry="2.4" transform="rotate(35 663.1 326.3)" fill="url(#hl)"/><circle cx="637.1" cy="317.4" r="15.7" fill="url(#gC)" stroke="#1a1a1a" stroke-opacity="0.55" stroke-width="0.7"/><ellipse cx="636.3" cy="317.7" rx="5.8" ry="2.6" transform="rotate(35 636.3 317.7)" fill="url(#hl)"/><circle cx="621.9" cy="314.5" r="14.7" fill="url(#gH)" stroke="#1a1a1a" stroke-opacity="0.55" stroke-width="0.7"/><ellipse cx="621.1" cy="314.8" rx="5.4" ry="2.4" transform="rotate(35 621.1 314.8)" fill="url(#hl)"/><circle cx="670.6" cy="306.0" r="13.7" fill="url(#gO)" stroke="#1a1a1a" stroke-opacity="0.55" stroke-width="0.7"/><ellipse cx="669.9" cy="306.3" rx="5.0" ry="2.2" transform="rotate(35 669.9 306.3)" fill="url(#hl)"/><circle cx="602.7" cy="370.0" r="14.7" fill="url(#gH)" stroke="#1a1a1a" stroke-opacity="0.55" stroke-width="0.7"/><ellipse cx="602.0" cy="370.3" rx="5.4" ry="2.4" transform="rotate(35 602.0 370.3)" fill="url(#hl)"/><circle cx="535.0" cy="372.8" r="13.7" fill="url(#gO)" stroke="#1a1a1a" stroke-opacity="0.55" stroke-width="0.7"/><ellipse cx="534.3" cy="373.1" rx="5.0" ry="2.2" transform="rotate(35 534.3 373.1)" fill="url(#hl)"/><circle cx="549.2" cy="389.5" r="14.7" fill="url(#gH)" stroke="#1a1a1a" stroke-opacity="0.55" stroke-width="0.7"/><ellipse cx="548.5" cy="389.8" rx="5.4" ry="2.4" transform="rotate(35 548.5 389.8)" fill="url(#hl)"/><circle cx="685.0" cy="367.0" r="14.7" fill="url(#gH)" stroke="#1a1a1a" stroke-opacity="0.55" stroke-width="0.7"/><ellipse cx="684.2" cy="367.3" rx="5.4" ry="2.4" transform="rotate(35 684.2 367.3)" fill="url(#hl)"/><circle cx="731.1" cy="266.8" r="13.7" fill="url(#gO)" stroke="#1a1a1a" stroke-opacity="0.55" stroke-width="0.7"/><ellipse cx="730.4" cy="267.1" rx="5.0" ry="2.2" transform="rotate(35 730.4 267.1)" fill="url(#hl)"/><circle cx="713.9" cy="279.2" r="17.7" fill="url(#gP)" stroke="#1a1a1a" stroke-opacity="0.55" stroke-width="0.7"/><ellipse cx="713.0" cy="279.6" rx="6.5" ry="2.9" transform="rotate(35 713.0 279.6)" fill="url(#hl)"/><circle cx="771.2" cy="284.9" r="19.7" fill="url(#gA)" stroke="#1a1a1a" stroke-opacity="0.55" stroke-width="0.7"/><ellipse cx="770.2" cy="285.3" rx="7.2" ry="3.2" transform="rotate(35 770.2 285.3)" fill="url(#hl)"/><circle cx="825.7" cy="288.7" r="13.7" fill="url(#gO)" stroke="#1a1a1a" stroke-opacity="0.55" stroke-width="0.7"/><ellipse cx="825.0" cy="289.0" rx="5.0" ry="2.2" transform="rotate(35 825.0 289.0)" fill="url(#hl)"/><circle cx="751.2" cy="308.8" r="13.7" fill="url(#gO)" stroke="#1a1a1a" stroke-opacity="0.55" stroke-width="0.7"/><ellipse cx="750.5" cy="309.1" rx="5.0" ry="2.2" transform="rotate(35 750.5 309.1)" fill="url(#hl)"/><circle cx="804.7" cy="313.6" r="19.7" fill="url(#gA)" stroke="#1a1a1a" stroke-opacity="0.55" stroke-width="0.7"/><ellipse cx="803.7" cy="314.0" rx="7.2" ry="3.2" transform="rotate(35 803.7 314.0)" fill="url(#hl)"/><circle cx="756.0" cy="337.5" r="13.7" fill="url(#gO)" stroke="#1a1a1a" stroke-opacity="0.55" stroke-width="0.7"/><ellipse cx="755.3" cy="337.8" rx="5.0" ry="2.2" transform="rotate(35 755.3 337.8)" fill="url(#hl)"/><circle cx="862.0" cy="318.3" r="17.7" fill="url(#gP)" stroke="#1a1a1a" stroke-opacity="0.55" stroke-width="0.7"/><ellipse cx="861.1" cy="318.7" rx="6.5" ry="2.9" transform="rotate(35 861.1 318.7)" fill="url(#hl)"/><circle cx="845.7" cy="330.8" r="13.7" fill="url(#gO)" stroke="#1a1a1a" stroke-opacity="0.55" stroke-width="0.7"/><ellipse cx="845.0" cy="331.1" rx="5.0" ry="2.2" transform="rotate(35 845.0 331.1)" fill="url(#hl)"/><circle cx="802.7" cy="355.6" r="13.7" fill="url(#gO)" stroke="#1a1a1a" stroke-opacity="0.55" stroke-width="0.7"/><ellipse cx="802.0" cy="355.9" rx="5.0" ry="2.2" transform="rotate(35 802.0 355.9)" fill="url(#hl)"/><circle cx="867.7" cy="363.3" r="13.7" fill="url(#gO)" stroke="#1a1a1a" stroke-opacity="0.55" stroke-width="0.7"/><ellipse cx="867.0" cy="363.6" rx="5.0" ry="2.2" transform="rotate(35 867.0 363.6)" fill="url(#hl)"/><circle cx="775.0" cy="377.0" r="17.7" fill="url(#gP)" stroke="#1a1a1a" stroke-opacity="0.55" stroke-width="0.7"/><ellipse cx="774.1" cy="377.4" rx="6.5" ry="2.9" transform="rotate(35 774.1 377.4)" fill="url(#hl)"/><circle cx="823.8" cy="386.0" r="14.7" fill="url(#gH)" stroke="#1a1a1a" stroke-opacity="0.55" stroke-width="0.7"/><ellipse cx="823.0" cy="386.3" rx="5.4" ry="2.4" transform="rotate(35 823.0 386.3)" fill="url(#hl)"/><circle cx="809.4" cy="404.0" r="13.7" fill="url(#gO)" stroke="#1a1a1a" stroke-opacity="0.55" stroke-width="0.7"/><ellipse cx="808.7" cy="404.3" rx="5.0" ry="2.2" transform="rotate(35 808.7 404.3)" fill="url(#hl)"/><circle cx="905.8" cy="294.5" r="13.7" fill="url(#gO)" stroke="#1a1a1a" stroke-opacity="0.55" stroke-width="0.7"/><ellipse cx="905.1" cy="294.8" rx="5.0" ry="2.2" transform="rotate(35 905.1 294.8)" fill="url(#hl)"/><circle cx="911.5" cy="273.4" r="14.7" fill="url(#gH)" stroke="#1a1a1a" stroke-opacity="0.55" stroke-width="0.7"/><ellipse cx="910.8" cy="273.7" rx="5.4" ry="2.4" transform="rotate(35 910.8 273.7)" fill="url(#hl)"/><circle cx="956.4" cy="287.8" r="14.7" fill="url(#gH)" stroke="#1a1a1a" stroke-opacity="0.55" stroke-width="0.7"/><ellipse cx="955.6" cy="288.1" rx="5.4" ry="2.4" transform="rotate(35 955.6 288.1)" fill="url(#hl)"/><circle cx="941.2" cy="284.0" r="15.7" fill="url(#gC)" stroke="#1a1a1a" stroke-opacity="0.55" stroke-width="0.7"/><ellipse cx="940.4" cy="284.3" rx="5.8" ry="2.6" transform="rotate(35 940.4 284.3)" fill="url(#hl)"/><circle cx="943.0" cy="265.8" r="14.7" fill="url(#gH)" stroke="#1a1a1a" stroke-opacity="0.55" stroke-width="0.7"/><ellipse cx="942.2" cy="266.1" rx="5.4" ry="2.4" transform="rotate(35 942.2 266.1)" fill="url(#hl)"/><circle cx="978.4" cy="261.0" r="15.7" fill="url(#gC)" stroke="#1a1a1a" stroke-opacity="0.55" stroke-width="0.7"/><ellipse cx="977.6" cy="261.3" rx="5.8" ry="2.6" transform="rotate(35 977.6 261.3)" fill="url(#hl)"/><circle cx="1008.0" cy="264.8" r="14.7" fill="url(#gH)" stroke="#1a1a1a" stroke-opacity="0.55" stroke-width="0.7"/><ellipse cx="1007.2" cy="265.1" rx="5.4" ry="2.4" transform="rotate(35 1007.2 265.1)" fill="url(#hl)"/><circle cx="982.2" cy="284.0" r="13.7" fill="url(#gN)" stroke="#1a1a1a" stroke-opacity="0.55" stroke-width="0.7"/><ellipse cx="981.5" cy="284.3" rx="5.0" ry="2.2" transform="rotate(35 981.5 284.3)" fill="url(#hl)"/><circle cx="998.5" cy="328.9" r="14.7" fill="url(#gH)" stroke="#1a1a1a" stroke-opacity="0.55" stroke-width="0.7"/><ellipse cx="997.8" cy="329.2" rx="5.4" ry="2.4" transform="rotate(35 997.8 329.2)" fill="url(#hl)"/><circle cx="993.7" cy="309.7" r="14.7" fill="url(#gH)" stroke="#1a1a1a" stroke-opacity="0.55" stroke-width="0.7"/><ellipse cx="993.0" cy="310.0" rx="5.4" ry="2.4" transform="rotate(35 993.0 310.0)" fill="url(#hl)"/><circle cx="931.6" cy="350.8" r="14.7" fill="url(#gH)" stroke="#1a1a1a" stroke-opacity="0.55" stroke-width="0.7"/><ellipse cx="930.9" cy="351.1" rx="5.4" ry="2.4" transform="rotate(35 930.9 351.1)" fill="url(#hl)"/><circle cx="943.0" cy="331.7" r="15.7" fill="url(#gC)" stroke="#1a1a1a" stroke-opacity="0.55" stroke-width="0.7"/><ellipse cx="942.2" cy="332.0" rx="5.8" ry="2.6" transform="rotate(35 942.2 332.0)" fill="url(#hl)"/><circle cx="920.0" cy="336.5" r="14.7" fill="url(#gH)" stroke="#1a1a1a" stroke-opacity="0.55" stroke-width="0.7"/><ellipse cx="919.2" cy="336.8" rx="5.4" ry="2.4" transform="rotate(35 919.2 336.8)" fill="url(#hl)"/><circle cx="936.4" cy="368.0" r="14.7" fill="url(#gH)" stroke="#1a1a1a" stroke-opacity="0.55" stroke-width="0.7"/><ellipse cx="935.6" cy="368.3" rx="5.4" ry="2.4" transform="rotate(35 935.6 368.3)" fill="url(#hl)"/><circle cx="1028.0" cy="372.0" r="14.7" fill="url(#gH)" stroke="#1a1a1a" stroke-opacity="0.55" stroke-width="0.7"/><ellipse cx="1027.2" cy="372.3" rx="5.4" ry="2.4" transform="rotate(35 1027.2 372.3)" fill="url(#hl)"/><circle cx="983.2" cy="360.4" r="15.7" fill="url(#gC)" stroke="#1a1a1a" stroke-opacity="0.55" stroke-width="0.7"/><ellipse cx="982.4" cy="360.7" rx="5.8" ry="2.6" transform="rotate(35 982.4 360.7)" fill="url(#hl)"/><circle cx="1010.0" cy="350.0" r="14.7" fill="url(#gH)" stroke="#1a1a1a" stroke-opacity="0.55" stroke-width="0.7"/><ellipse cx="1009.2" cy="350.3" rx="5.4" ry="2.4" transform="rotate(35 1009.2 350.3)" fill="url(#hl)"/><circle cx="1011.0" cy="372.8" r="13.7" fill="url(#gO)" stroke="#1a1a1a" stroke-opacity="0.55" stroke-width="0.7"/><ellipse cx="1010.3" cy="373.1" rx="5.0" ry="2.2" transform="rotate(35 1010.3 373.1)" fill="url(#hl)"/><circle cx="973.6" cy="381.0" r="14.7" fill="url(#gH)" stroke="#1a1a1a" stroke-opacity="0.55" stroke-width="0.7"/><ellipse cx="972.9" cy="381.3" rx="5.4" ry="2.4" transform="rotate(35 972.9 381.3)" fill="url(#hl)"/><circle cx="960.3" cy="381.4" r="13.7" fill="url(#gN)" stroke="#1a1a1a" stroke-opacity="0.55" stroke-width="0.7"/><ellipse cx="959.6" cy="381.7" rx="5.0" ry="2.2" transform="rotate(35 959.6 381.7)" fill="url(#hl)"/><circle cx="977.5" cy="390.0" r="14.7" fill="url(#gH)" stroke="#1a1a1a" stroke-opacity="0.55" stroke-width="0.7"/><ellipse cx="976.8" cy="390.3" rx="5.4" ry="2.4" transform="rotate(35 976.8 390.3)" fill="url(#hl)"/><circle cx="1048.0" cy="401.0" r="17.7" fill="url(#gP)" stroke="#1a1a1a" stroke-opacity="0.55" stroke-width="0.7"/><ellipse cx="1047.1" cy="401.4" rx="6.5" ry="2.9" transform="rotate(35 1047.1 401.4)" fill="url(#hl)"/><circle cx="528.2" cy="421.2" r="13.7" fill="url(#gO)" stroke="#1a1a1a" stroke-opacity="0.55" stroke-width="0.7"/><ellipse cx="527.5" cy="421.5" rx="5.0" ry="2.2" transform="rotate(35 527.5 421.5)" fill="url(#hl)"/><circle cx="594.1" cy="413.5" r="13.7" fill="url(#gO)" stroke="#1a1a1a" stroke-opacity="0.55" stroke-width="0.7"/><ellipse cx="593.4" cy="413.8" rx="5.0" ry="2.2" transform="rotate(35 593.4 413.8)" fill="url(#hl)"/><circle cx="570.3" cy="446.0" r="13.7" fill="url(#gO)" stroke="#1a1a1a" stroke-opacity="0.55" stroke-width="0.7"/><ellipse cx="569.6" cy="446.3" rx="5.0" ry="2.2" transform="rotate(35 569.6 446.3)" fill="url(#hl)"/><circle cx="531.1" cy="464.1" r="19.7" fill="url(#gA)" stroke="#1a1a1a" stroke-opacity="0.55" stroke-width="0.7"/><ellipse cx="530.1" cy="464.5" rx="7.2" ry="3.2" transform="rotate(35 530.1 464.5)" fill="url(#hl)"/><circle cx="588.4" cy="458.4" r="17.7" fill="url(#gP)" stroke="#1a1a1a" stroke-opacity="0.55" stroke-width="0.7"/><ellipse cx="587.5" cy="458.8" rx="6.5" ry="2.9" transform="rotate(35 587.5 458.8)" fill="url(#hl)"/><circle cx="663.0" cy="409.7" r="14.7" fill="url(#gH)" stroke="#1a1a1a" stroke-opacity="0.55" stroke-width="0.7"/><ellipse cx="662.2" cy="410.0" rx="5.4" ry="2.4" transform="rotate(35 662.2 410.0)" fill="url(#hl)"/><circle cx="658.0" cy="424.0" r="14.7" fill="url(#gH)" stroke="#1a1a1a" stroke-opacity="0.55" stroke-width="0.7"/><ellipse cx="657.2" cy="424.3" rx="5.4" ry="2.4" transform="rotate(35 657.2 424.3)" fill="url(#hl)"/><circle cx="646.7" cy="440.3" r="14.7" fill="url(#gH)" stroke="#1a1a1a" stroke-opacity="0.55" stroke-width="0.7"/><ellipse cx="646.0" cy="440.6" rx="5.4" ry="2.4" transform="rotate(35 646.0 440.6)" fill="url(#hl)"/><circle cx="669.6" cy="446.0" r="15.7" fill="url(#gC)" stroke="#1a1a1a" stroke-opacity="0.55" stroke-width="0.7"/><ellipse cx="668.8" cy="446.3" rx="5.8" ry="2.6" transform="rotate(35 668.8 446.3)" fill="url(#hl)"/><circle cx="706.0" cy="382.0" r="14.7" fill="url(#gH)" stroke="#1a1a1a" stroke-opacity="0.55" stroke-width="0.7"/><ellipse cx="705.2" cy="382.3" rx="5.4" ry="2.4" transform="rotate(35 705.2 382.3)" fill="url(#hl)"/><circle cx="688.7" cy="395.4" r="13.7" fill="url(#gN)" stroke="#1a1a1a" stroke-opacity="0.55" stroke-width="0.7"/><ellipse cx="688.0" cy="395.7" rx="5.0" ry="2.2" transform="rotate(35 688.0 395.7)" fill="url(#hl)"/><circle cx="701.0" cy="395.5" r="14.7" fill="url(#gH)" stroke="#1a1a1a" stroke-opacity="0.55" stroke-width="0.7"/><ellipse cx="700.2" cy="395.8" rx="5.4" ry="2.4" transform="rotate(35 700.2 395.8)" fill="url(#hl)"/><circle cx="732.0" cy="400.0" r="13.7" fill="url(#gO)" stroke="#1a1a1a" stroke-opacity="0.55" stroke-width="0.7"/><ellipse cx="731.3" cy="400.3" rx="5.0" ry="2.2" transform="rotate(35 731.3 400.3)" fill="url(#hl)"/><circle cx="705.3" cy="419.2" r="15.7" fill="url(#gC)" stroke="#1a1a1a" stroke-opacity="0.55" stroke-width="0.7"/><ellipse cx="704.5" cy="419.5" rx="5.8" ry="2.6" transform="rotate(35 704.5 419.5)" fill="url(#hl)"/><circle cx="741.6" cy="428.8" r="14.7" fill="url(#gH)" stroke="#1a1a1a" stroke-opacity="0.55" stroke-width="0.7"/><ellipse cx="740.9" cy="429.1" rx="5.4" ry="2.4" transform="rotate(35 740.9 429.1)" fill="url(#hl)"/><circle cx="751.2" cy="404.0" r="14.7" fill="url(#gH)" stroke="#1a1a1a" stroke-opacity="0.55" stroke-width="0.7"/><ellipse cx="750.5" cy="404.3" rx="5.4" ry="2.4" transform="rotate(35 750.5 404.3)" fill="url(#hl)"/><circle cx="721.5" cy="417.3" r="15.7" fill="url(#gC)" stroke="#1a1a1a" stroke-opacity="0.55" stroke-width="0.7"/><ellipse cx="720.7" cy="417.6" rx="5.8" ry="2.6" transform="rotate(35 720.7 417.6)" fill="url(#hl)"/><circle cx="719.6" cy="469.0" r="14.7" fill="url(#gH)" stroke="#1a1a1a" stroke-opacity="0.55" stroke-width="0.7"/><ellipse cx="718.9" cy="469.3" rx="5.4" ry="2.4" transform="rotate(35 718.9 469.3)" fill="url(#hl)"/><circle cx="724.4" cy="449.8" r="14.7" fill="url(#gH)" stroke="#1a1a1a" stroke-opacity="0.55" stroke-width="0.7"/><ellipse cx="723.6" cy="450.1" rx="5.4" ry="2.4" transform="rotate(35 723.6 450.1)" fill="url(#hl)"/><circle cx="876.3" cy="407.8" r="14.7" fill="url(#gH)" stroke="#1a1a1a" stroke-opacity="0.55" stroke-width="0.7"/><ellipse cx="875.5" cy="408.1" rx="5.4" ry="2.4" transform="rotate(35 875.5 408.1)" fill="url(#hl)"/><circle cx="852.0" cy="437.0" r="14.7" fill="url(#gH)" stroke="#1a1a1a" stroke-opacity="0.55" stroke-width="0.7"/><ellipse cx="851.2" cy="437.3" rx="5.4" ry="2.4" transform="rotate(35 851.2 437.3)" fill="url(#hl)"/><circle cx="841.0" cy="444.0" r="14.7" fill="url(#gH)" stroke="#1a1a1a" stroke-opacity="0.55" stroke-width="0.7"/><ellipse cx="840.2" cy="444.3" rx="5.4" ry="2.4" transform="rotate(35 840.2 444.3)" fill="url(#hl)"/><circle cx="871.5" cy="438.3" r="15.7" fill="url(#gC)" stroke="#1a1a1a" stroke-opacity="0.55" stroke-width="0.7"/><ellipse cx="870.7" cy="438.6" rx="5.8" ry="2.6" transform="rotate(35 870.7 438.6)" fill="url(#hl)"/><circle cx="867.7" cy="461.3" r="13.7" fill="url(#gN)" stroke="#1a1a1a" stroke-opacity="0.55" stroke-width="0.7"/><ellipse cx="867.0" cy="461.6" rx="5.0" ry="2.2" transform="rotate(35 867.0 461.6)" fill="url(#hl)"/><circle cx="959.3" cy="411.6" r="14.7" fill="url(#gH)" stroke="#1a1a1a" stroke-opacity="0.55" stroke-width="0.7"/><ellipse cx="958.5" cy="411.9" rx="5.4" ry="2.4" transform="rotate(35 958.5 411.9)" fill="url(#hl)"/><circle cx="1029.0" cy="440.3" r="13.7" fill="url(#gO)" stroke="#1a1a1a" stroke-opacity="0.55" stroke-width="0.7"/><ellipse cx="1028.3" cy="440.6" rx="5.0" ry="2.2" transform="rotate(35 1028.3 440.6)" fill="url(#hl)"/><circle cx="1025.2" cy="469.0" r="13.7" fill="url(#gO)" stroke="#1a1a1a" stroke-opacity="0.55" stroke-width="0.7"/><ellipse cx="1024.5" cy="469.3" rx="5.0" ry="2.2" transform="rotate(35 1024.5 469.3)" fill="url(#hl)"/><circle cx="906.8" cy="442.2" r="14.7" fill="url(#gH)" stroke="#1a1a1a" stroke-opacity="0.55" stroke-width="0.7"/><ellipse cx="906.0" cy="442.5" rx="5.4" ry="2.4" transform="rotate(35 906.0 442.5)" fill="url(#hl)"/><circle cx="908.7" cy="459.4" r="15.7" fill="url(#gC)" stroke="#1a1a1a" stroke-opacity="0.55" stroke-width="0.7"/><ellipse cx="907.9" cy="459.7" rx="5.8" ry="2.6" transform="rotate(35 907.9 459.7)" fill="url(#hl)"/><circle cx="896.0" cy="462.2" r="14.7" fill="url(#gH)" stroke="#1a1a1a" stroke-opacity="0.55" stroke-width="0.7"/><ellipse cx="895.2" cy="462.5" rx="5.4" ry="2.4" transform="rotate(35 895.2 462.5)" fill="url(#hl)"/><circle cx="937.3" cy="451.7" r="14.7" fill="url(#gH)" stroke="#1a1a1a" stroke-opacity="0.55" stroke-width="0.7"/><ellipse cx="936.5" cy="452.0" rx="5.4" ry="2.4" transform="rotate(35 936.5 452.0)" fill="url(#hl)"/><circle cx="944.0" cy="472.7" r="13.7" fill="url(#gO)" stroke="#1a1a1a" stroke-opacity="0.55" stroke-width="0.7"/><ellipse cx="943.3" cy="473.0" rx="5.0" ry="2.2" transform="rotate(35 943.3 473.0)" fill="url(#hl)"/><text x="499" y="138" font-family="Liberation Sans" font-size="22.5" fill="#10c010">B</text><text x="1061" y="496" font-family="Liberation Sans" font-size="22" fill="#1e8ce6">C</text><circle cx="505" cy="488" r="6.5" fill="none" stroke="#e0e0e0" stroke-width="2"/><text x="505" y="495.5" font-family="Liberation Sans" font-size="17" fill="#f01010" text-anchor="middle">A</text><line x1="316.6" y1="501" x2="316.6" y2="479" stroke="#10c010" stroke-width="2.4"/><path d="M312.8 479 L316.6 469 L320.4 479 Z" fill="#10c010"/><line x1="318" y1="502" x2="343" y2="502" stroke="#e8e800" stroke-width="2"/><path d="M345 498 L356 502 L345 506 Z" fill="#e0e000"/><circle cx="316.6" cy="502" r="3" fill="#f0f0f0"/><text x="317" y="471" font-family="Liberation Sans" font-size="10.5" fill="#a8a8a8">Y</text><text x="317.5" y="501.5" font-family="Liberation Sans" font-size="9.5" fill="#808080">X</text><text x="353.5" y="503" font-family="Liberation Sans" font-size="11.5" fill="#a8a8a8">Z</text></svg></div><div style="left:272px;top:88px;width:1031px;height:452px;border:3px solid #ff3a3a;box-sizing:border-box;"></div><div class="t" style="left:279px;top:564px;font-family:'Liberation Mono', monospace;font-size:11px;letter-spacing:-0.6px;color:#000;">Job Manager</div><div class="t" style="left:907px;top:564px;font-family:'Liberation Mono', monospace;font-size:11px;letter-spacing:-0.6px;color:#000;">log in local successfully</div><div style="left:1224px;top:560px;width:22px;height:22px;background:linear-gradient(#fafafa,#e0e0e0);border:1px solid #6e6e6e;border-radius:3px;box-sizing:border-box;"></div><div style="left:1248px;top:560px;width:22px;height:22px;background:linear-gradient(#fafafa,#e0e0e0);border:1px solid #a9b2bb;border-radius:3px;box-sizing:border-box;"></div><div style="left:1272px;top:560px;width:22px;height:22px;background:linear-gradient(#fafafa,#e0e0e0);border:1px solid #6e6e6e;border-radius:3px;box-sizing:border-box;"></div><svg style="position:absolute;left:1226px;top:562px" width="18" height="18" viewBox="0 0 18 18"><path d="M9.00 1.70 L9.29 1.71 L9.57 1.72 L9.86 1.75 L10.02 2.57 L10.05 3.74 L10.17 4.14 L10.36 4.19 L10.55 4.24 L10.73 4.31 L10.91 4.38 L11.09 4.46 L11.27 4.54 L11.44 4.64 L11.61 4.74 L11.98 4.54 L12.82 3.74 L13.52 3.27 L13.74 3.45 L13.96 3.64 L14.16 3.84 L14.36 4.04 L14.55 4.26 L14.73 4.48 L14.26 5.18 L13.46 6.02 L13.26 6.39 L13.36 6.56 L13.46 6.73 L13.54 6.91 L13.62 7.09 L13.69 7.27 L13.76 7.45 L13.81 7.64 L13.86 7.83 L14.26 7.95 L15.43 7.98 L16.25 8.14 L16.28 8.43 L16.29 8.71 L16.30 9.00 L16.29 9.29 L16.28 9.57 L16.25 9.86 L15.43 10.02 L14.26 10.05 L13.86 10.17 L13.81 10.36 L13.76 10.55 L13.69 10.73 L13.62 10.91 L13.54 11.09 L13.46 11.27 L13.36 11.44 L13.26 11.61 L13.46 11.98 L14.26 12.82 L14.73 13.52 L14.55 13.74 L14.36 13.96 L14.16 14.16 L13.96 14.36 L13.74 14.55 L13.52 14.73 L12.82 14.26 L11.98 13.46 L11.61 13.26 L11.44 13.36 L11.27 13.46 L11.09 13.54 L10.91 13.62 L10.73 13.69 L10.55 13.76 L10.36 13.81 L10.17 13.86 L10.05 14.26 L10.02 15.43 L9.86 16.25 L9.57 16.28 L9.29 16.29 L9.00 16.30 L8.71 16.29 L8.43 16.28 L8.14 16.25 L7.98 15.43 L7.95 14.26 L7.83 13.86 L7.64 13.81 L7.45 13.76 L7.27 13.69 L7.09 13.62 L6.91 13.54 L6.73 13.46 L6.56 13.36 L6.39 13.26 L6.02 13.46 L5.18 14.26 L4.48 14.73 L4.26 14.55 L4.04 14.36 L3.84 14.16 L3.64 13.96 L3.45 13.74 L3.27 13.52 L3.74 12.82 L4.54 11.98 L4.74 11.61 L4.64 11.44 L4.54 11.27 L4.46 11.09 L4.38 10.91 L4.31 10.73 L4.24 10.55 L4.19 10.36 L4.14 10.17 L3.74 10.05 L2.57 10.02 L1.75 9.86 L1.72 9.57 L1.71 9.29 L1.70 9.00 L1.71 8.71 L1.72 8.43 L1.75 8.14 L2.57 7.98 L3.74 7.95 L4.14 7.83 L4.19 7.64 L4.24 7.45 L4.31 7.27 L4.38 7.09 L4.46 6.91 L4.54 6.73 L4.64 6.56 L4.74 6.39 L4.54 6.02 L3.74 5.18 L3.27 4.48 L3.45 4.26 L3.64 4.04 L3.84 3.84 L4.04 3.64 L4.26 3.45 L4.48 3.27 L5.18 3.74 L6.02 4.54 L6.39 4.74 L6.56 4.64 L6.73 4.54 L6.91 4.46 L7.09 4.38 L7.27 4.31 L7.45 4.24 L7.64 4.19 L7.83 4.14 L7.95 3.74 L7.98 2.57 L8.14 1.75 L8.43 1.72 L8.71 1.71 L9.00 1.70 Z" fill="none" stroke="#333" stroke-width="1.1" stroke-linejoin="round"/><circle cx="9" cy="9" r="2.4" fill="none" stroke="#333" stroke-width="1.1"/></svg><svg style="position:absolute;left:1250px;top:562px" width="18" height="18" viewBox="0 0 18 18"><g fill="none" stroke="#8a8a8a" stroke-width="1.3" stroke-dasharray="1.6 0.8"><path d="M2 13.5 H4.5 C7.5 13.5 7.5 4.5 11 4.5 H13.5"/><path d="M2 4.5 H4"/><path d="M10 13.5 H13.5"/></g><path d="M12.5 2 L15.5 4.5 L12.5 7 M12.5 11 L15.5 13.5 L12.5 16" fill="none" stroke="#6a6a6a" stroke-width="1.1"/></svg><svg style="position:absolute;left:1274px;top:562px" width="18" height="18" viewBox="0 0 18 18"><g fill="none" stroke-linecap="butt"><path d="M3 10 C2.5 5.5 7 3.5 11 5 L11 2.5 L15.5 6.5 L11 10 L11 7.5 C8 6.5 4.5 7.5 3 10 Z" fill="#fff" stroke="#2a2a2a" stroke-width="1.1" stroke-linejoin="round"/><path d="M15 8 C15.5 12.5 11 14.5 7 13 L7 15.5 L2.5 11.5 L7 8 L7 10.5 C10 11.5 13.5 10.5 15 8 Z" fill="#fff" stroke="#2a2a2a" stroke-width="1.1" stroke-linejoin="round"/></g></svg><div style="left:279px;top:587px;width:1016px;height:211px;background:#c7edcc;border:1px solid #8e9aa8;box-sizing:border-box;"></div><div style="left:280px;top:588px;width:1014px;height:24px;background:linear-gradient(#ffffff 0%,#ffffff 45%,#f1f2f4 50%,#eef0f3 100%);border-bottom:1px solid #d5d5d5;box-sizing:border-box;"></div><div style="left:429px;top:588px;width:1px;height:24px;background:#dcdcdc;"></div><div style="left:1003px;top:588px;width:1px;height:24px;background:#dcdcdc;"></div><div style="left:1103px;top:588px;width:1px;height:24px;background:#dcdcdc;"></div><div class="t" style="left:322px;top:593px;font-size:13px;color:#000;">Description</div><div class="t" style="left:700px;top:593px;font-size:13px;color:#000;">Script</div><div class="t" style="left:1037px;top:593px;font-size:13px;color:#000;">Status</div><div class="t" style="left:1178px;top:593px;font-size:13px;color:#000;">Actions</div><div style="left:280px;top:642px;width:1014px;height:1px;background:#a9c8ad;"></div><div style="left:429px;top:612px;width:1px;height:30px;background:#a9c8ad;"></div><div style="left:1003px;top:612px;width:1px;height:30px;background:#a9c8ad;"></div><div style="left:1103px;top:612px;width:1px;height:30px;background:#a9c8ad;"></div><div class="t" style="left:283px;top:620px;font-size:13px;color:#000;">MoS2</div><div class="t" style="left:433px;top:620px;font-size:13px;color:#000;white-space:nowrap;">C:/Users/feifeilu/Documents/DeviceStudioProjects/DeviceStudio/MoS2/Crystal/scf.input</div><div class="t" style="left:1007px;top:620px;font-size:13px;color:#000;">Finished</div><div style="left:1185px;top:616px;width:26px;height:22px;background:linear-gradient(#fafafa,#dedede);border:1px solid #8a8a8a;border-radius:3px;box-sizing:border-box;"></div><svg style="position:absolute;left:1190px;top:619px" width="16" height="16" viewBox="0 0 16 16"><path d="M6 2.5 H10 V8 H13 L8 13.5 L3 8 H6 Z" fill="#fff" stroke="#333" stroke-width="1.2" stroke-linejoin="round"/></svg><div style="left:280px;top:672px;width:1014px;height:1px;background:#a9c8ad;"></div><div style="left:429px;top:642px;width:1px;height:30px;background:#a9c8ad;"></div><div style="left:1003px;top:642px;width:1px;height:30px;background:#a9c8ad;"></div><div style="left:1103px;top:642px;width:1px;height:30px;background:#a9c8ad;"></div><div class="t" style="left:283px;top:650px;font-size:13px;color:#000;">MoS2</div><div class="t" style="left:433px;top:650px;font-size:13px;color:#000;white-space:nowrap;">C:/Users/feifeilu/Documents/DeviceStudioProjects/DeviceStudio/MoS2/Crystal/BandStructure.in...</div><div class="t" style="left:1007px;top:650px;font-size:13px;color:#000;">Finished</div><div style="left:1185px;top:646px;width:26px;height:22px;background:linear-gradient(#fafafa,#dedede);border:1px solid #8a8a8a;border-radius:3px;box-sizing:border-box;"></div><svg style="position:absolute;left:1190px;top:649px" width="16" height="16" viewBox="0 0 16 16"><path d="M6 2.5 H10 V8 H13 L8 13.5 L3 8 H6 Z" fill="#fff" stroke="#333" stroke-width="1.2" stroke-linejoin="round"/></svg><div style="left:281px;top:613px;width:148px;height:29px;border:1px dotted #222;box-sizing:border-box;"></div><div style="left:1300px;top:820px;width:1px;height:1px;background:#a0a0a0;"></div><div style="left:1297px;top:823px;width:1px;height:1px;background:#a0a0a0;"></div><div style="left:1300px;top:823px;width:1px;height:1px;background:#a0a0a0;"></div><div style="left:1294px;top:826px;width:1px;height:1px;background:#a0a0a0;"></div><div style="left:1297px;top:826px;width:1px;height:1px;background:#a0a0a0;"></div><div style="left:1300px;top:826px;width:1px;height:1px;background:#a0a0a0;"></div><svg style="position:absolute;left:200px;top:456px" width="72" height="16" viewBox="0 0 72 16"><path d="M5 7 L58 8.7" stroke="#ee3a36" stroke-width="2"/><path d="M57 4 L67 8.8 L57 13.5 Z" fill="#ee3a36"/></svg>
</body></html>
